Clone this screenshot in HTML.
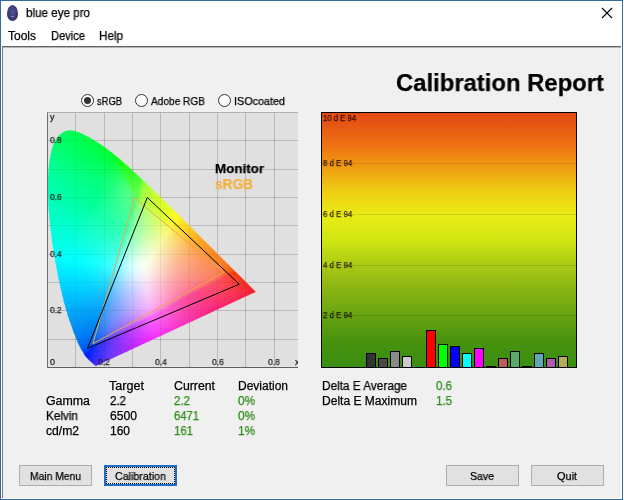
<!DOCTYPE html>
<html><head><meta charset="utf-8"><style>
*{margin:0;padding:0;box-sizing:border-box}
html,body{width:624px;height:500px;overflow:hidden;background:#fff}
body{position:relative;font-family:"Liberation Sans",sans-serif;color:#000}
.abs{position:absolute}
.t{position:absolute;white-space:nowrap;font-weight:normal;will-change:transform;-webkit-text-stroke:0.25px currentColor}
i{position:absolute;height:1px;display:block}
.gv{position:absolute;top:113px;height:254px;width:1px;background:rgba(0,0,0,.13)}
.gh{position:absolute;left:48px;width:250px;height:1px;background:rgba(0,0,0,.13)}
.bar{position:absolute;width:10px;border:1px solid #000}
.dl{position:absolute;left:322px;width:254px;height:1px;background:rgba(0,0,0,.12)}
.btn{position:absolute;top:465px;width:73px;height:21px;background:#e1e1e1;border:1px solid #adadad}
.radio{position:absolute;top:94px;width:13px;height:13px;border-radius:50%;border:1.3px solid #333;background:#fff}
</style></head><body>
<div class="abs" style="left:0;top:0;width:623px;height:500px;border:1px solid #336b9c"></div>
<div class="abs" style="left:7px;top:5px;width:11px;height:16px;border-radius:50% 50% 50% 50%/56% 56% 44% 44%;background:radial-gradient(ellipse at 50% 40%,#50508a 0,#3a3a74 55%,#23234e 100%)"></div><div class="abs" style="left:11px;top:16px;width:3px;height:1px;background:#8a8ab0"></div>
<b class="t" style="left:26.00px;top:6.84px;font-size:12px;line-height:12px;color:#000;transform:scaleX(0.9690);transform-origin:0 0;">blue eye pro</b>
<svg class="abs" style="left:600px;top:6px" width="14" height="14"><path d="M2 2L12 12M12 2L2 12" stroke="#000" stroke-width="1.1"/></svg>
<b class="t" style="left:8.00px;top:29.84px;font-size:12px;line-height:12px;color:#000;">Tools</b>
<b class="t" style="left:51.00px;top:29.84px;font-size:12px;line-height:12px;color:#000;transform:scaleX(0.9264);transform-origin:0 0;">Device</b>
<b class="t" style="left:99.00px;top:29.84px;font-size:12px;line-height:12px;color:#000;transform:scaleX(0.9722);transform-origin:0 0;">Help</b>
<div class="abs" style="left:2px;top:46px;width:619px;height:452px;background:#f0f0f0;border-top:1px solid #646464;border-left:1px solid #7a7a7a;box-shadow:inset 0 1px 0 #b4b4b4"></div>
<b class="t" style="left:396.00px;top:70.68px;font-size:24px;line-height:24px;color:#000;font-weight:bold;transform:scaleX(0.9936);transform-origin:0 0;">Calibration Report</b>
<div class="radio" style="left:81px"><div class="abs" style="left:1.7px;top:1.7px;width:7px;height:7px;border-radius:50%;background:#333"></div></div>
<div class="radio" style="left:135px"></div>
<div class="radio" style="left:218px"></div>
<b class="t" style="left:97.00px;top:95.69px;font-size:11px;line-height:11px;color:#000;transform:scaleX(0.8518);transform-origin:0 0;">sRGB</b>
<b class="t" style="left:151.00px;top:95.69px;font-size:11px;line-height:11px;color:#000;transform:scaleX(0.9199);transform-origin:0 0;">Adobe RGB</b>
<b class="t" style="left:234.00px;top:95.69px;font-size:11px;line-height:11px;color:#000;transform:scaleX(0.9808);transform-origin:0 0;">ISOcoated</b>
<div class="abs" style="left:47px;top:112px;width:251px;height:256px;background:#e0e0e0;border-top:1px solid #b0b0b0;border-left:1px solid #707070;border-bottom:1px solid #606060"></div>
<div class="gv" style="left:75px"></div><div class="gv" style="left:104px"></div><div class="gv" style="left:132px"></div><div class="gv" style="left:160px"></div><div class="gv" style="left:189px"></div><div class="gv" style="left:217px"></div><div class="gv" style="left:245px"></div><div class="gv" style="left:274px"></div><div class="gh" style="top:339px"></div><div class="gh" style="top:310px"></div><div class="gh" style="top:282px"></div><div class="gh" style="top:254px"></div><div class="gh" style="top:225px"></div><div class="gh" style="top:197px"></div><div class="gh" style="top:169px"></div><div class="gh" style="top:140px"></div>
<i style="top:130px;left:66px;width:9px;background:linear-gradient(90deg,#c4e4cf 0px,#8cecae 1.5px,#70ef9c 2.5px,#46f582 3.5px,#38f779 4.5px,#70ef9a 5.5px,#70ef9a 6.5px,#a8e8bd 7.5px,#d2e2d7 9px)"></i>
<i style="top:131px;left:64px;width:14px;background:linear-gradient(90deg,#7eeea7 0px,#1cfb6d 1.5px,#00ff5b 2.5px,#00ff52 10.5px,#2af96c 11.5px,#8cecaa 12.5px,#d2e2d7 14px)"></i>
<i style="top:132px;left:62px;width:18px;background:linear-gradient(90deg,#9aeab8 0px,#1cfb70 1.5px,#00ff5e 2.5px,#00ff4f 15.5px,#46f57c 16.5px,#9aeab2 18px)"></i>
<i style="top:133px;left:60px;width:22px;background:linear-gradient(90deg,#d2e2d8 0px,#62f19a 1.5px,#00ff61 2.5px,#00ff4e 19.5px,#1cfb5f 20.5px,#70ef96 22px)"></i>
<i style="top:134px;left:59px;width:26px;background:linear-gradient(90deg,#d2e2d8 0px,#38f783 1.5px,#00ff63 2.5px,#00ff4c 22.5px,#0efd54 23.5px,#70ef95 24.5px,#c4e4cd 26px)"></i>
<i style="top:135px;left:58px;width:29px;background:linear-gradient(90deg,#d2e2d8 0px,#1cfb76 1.5px,#00ff65 2.5px,#00ff4b 25.5px,#0efd53 26.5px,#70ef94 27.5px,#c4e4cd 29px)"></i>
<i style="top:136px;left:58px;width:31px;background:linear-gradient(90deg,#2af97f 0px,#00ff67 1.5px,#00ff49 27.5px,#0efd51 28.5px,#d2e2d6 31px)"></i>
<i style="top:137px;left:57px;width:33px;background:linear-gradient(90deg,#46f58f 0px,#00ff69 1.5px,#00ff47 30.5px,#1cfb59 31.5px,#8ceca6 33px)"></i>
<i style="top:138px;left:56px;width:36px;background:linear-gradient(90deg,#7eeeae 0px,#00ff6b 1.5px,#00ff46 33.5px,#38f76b 34.5px,#a8e8b9 36px)"></i>
<i style="top:139px;left:55px;width:39px;background:linear-gradient(90deg,#c4e4d2 0px,#0efd75 1.5px,#00ff6c 2.5px,#00ff44 36.5px,#54f37d 37.5px,#d2e2d6 39px)"></i>
<i style="top:140px;left:55px;width:40px;background:linear-gradient(90deg,#54f39a 0px,#00ff6e 1.5px,#00ff43 37.5px,#0efd4b 38.5px,#70ef90 40px)"></i>
<i style="top:141px;left:54px;width:43px;background:linear-gradient(90deg,#a8e8c4 0px,#00ff70 1.5px,#00ff41 40.5px,#38f767 41.5px,#b6e6c1 43px)"></i>
<i style="top:142px;left:54px;width:44px;background:linear-gradient(90deg,#46f595 0px,#00ff71 1.5px,#00ff42 40.5px,#00ff3e 42.5px,#62f184 44px)"></i>
<i style="top:143px;left:53px;width:47px;background:linear-gradient(90deg,#c4e4d3 0px,#00ff73 1.5px,#00ff42 42.5px,#00ff3d 44.5px,#1cfb50 45.5px,#a8e8b6 47px)"></i>
<i style="top:144px;left:53px;width:49px;background:linear-gradient(90deg,#62f1a4 0px,#00ff74 1.5px,#00ff43 42.5px,#00ff3a 46.5px,#70ef8c 47.5px,#d2e2d5 49px)"></i>
<i style="top:145px;left:53px;width:50px;background:linear-gradient(90deg,#0efd7d 0px,#00ff75 1.5px,#00ff44 42.5px,#00ff3a 47.5px,#2af957 48.5px,#a8e8b5 50px)"></i>
<i style="top:146px;left:52px;width:52px;background:linear-gradient(90deg,#a8e8c6 0px,#00ff78 1.5px,#00ff44 44.5px,#00ff39 49.5px,#0efd41 50.5px,#7eee94 52px)"></i>
<i style="top:147px;left:52px;width:54px;background:linear-gradient(90deg,#62f1a7 0px,#00ff79 1.5px,#00ff46 44.5px,#00ff35 51.5px,#38f75e 52.5px,#d2e2d5 54px)"></i>
<i style="top:148px;left:52px;width:55px;background:linear-gradient(90deg,#2af98e 0px,#00ff7a 1.5px,#00ff47 44.5px,#00ff34 52.5px,#0efd3c 53.5px,#a8e8b3 55px)"></i>
<i style="top:149px;left:51px;width:57px;background:linear-gradient(90deg,#c4e4d4 0px,#00ff7c 1.5px,#00ff47 46.5px,#00ff30 55.5px,#70f086 57px)"></i>
<i style="top:150px;left:51px;width:59px;background:linear-gradient(90deg,#8cecbc 0px,#00ff7d 1.5px,#00ff48 46.5px,#00ff2f 56.5px,#38f758 57.5px,#d2e2d4 59px)"></i>
<i style="top:151px;left:51px;width:60px;background:linear-gradient(90deg,#62f1aa 0px,#00ff7e 1.5px,#00ff4a 46.5px,#00ff2e 57.5px,#0efd35 58.5px,#a8e8b1 60px)"></i>
<i style="top:152px;left:51px;width:61px;background:linear-gradient(90deg,#2af993 0px,#00ff80 1.5px,#00ff4a 47.5px,#00ff2d 58.5px,#00ff29 59.5px,#70f082 61px)"></i>
<i style="top:153px;left:51px;width:63px;background:linear-gradient(90deg,#00ff82 0px,#00ff4c 47.5px,#00ff30 58.5px,#00ff27 60.5px,#46f55d 61.5px,#d2e2d4 63px)"></i>
<i style="top:154px;left:50px;width:65px;background:linear-gradient(90deg,#a8e8c9 0px,#00ff83 1.5px,#00ff4c 49.5px,#00ff30 60.5px,#00ff26 62.5px,#2af943 63.5px,#c4e4c6 65px)"></i>
<i style="top:155px;left:50px;width:66px;background:linear-gradient(90deg,#8cecbe 0px,#00ff85 1.5px,#00ff4e 49.5px,#00ff33 60.5px,#00ff24 63.5px,#0efd28 64.5px,#a8e8aa 66px)"></i>
<i style="top:156px;left:50px;width:67px;background:linear-gradient(90deg,#62f1ae 0px,#00ff86 1.5px,#00ff4e 50.5px,#00ff33 61.5px,#00ff22 64.5px,#01ff18 65.5px,#8dec8e 67px)"></i>
<i style="top:157px;left:50px;width:69px;background:linear-gradient(90deg,#38f79e 0px,#00ff87 1.5px,#00ff50 50.5px,#00ff36 61.5px,#02ff20 65.5px,#03ff0f 66.5px,#56f358 67.5px,#d2e2d2 69px)"></i>
<i style="top:158px;left:50px;width:70px;background:linear-gradient(90deg,#0efd8f 0px,#00ff88 1.5px,#00ff50 51.5px,#00ff36 62.5px,#03ff26 65.5px,#04ff1c 66.5px,#05ff08 67.5px,#3df73e 68.5px,#d2e2d3 70px)"></i>
<i style="top:159px;left:49px;width:72px;background:linear-gradient(90deg,#d2e2db 0px,#00ff8b 1.5px,#00ff50 53.5px,#01ff39 63.5px,#05ff24 67.5px,#08ff0a 69.5px,#31f933 70.5px,#c5e4c6 72px)"></i>
<i style="top:160px;left:49px;width:73px;background:linear-gradient(90deg,#a8e8cb 0px,#00ff8c 1.5px,#00ff51 54.5px,#03ff39 64.5px,#07ff2a 67.5px,#08ff20 68.5px,#09ff0b 69.5px,#0aff0c 70.5px,#19fd1b 71.5px,#abe8ac 73px)"></i>
<i style="top:161px;left:49px;width:74px;background:linear-gradient(90deg,#8cecc1 0px,#00ff8d 1.5px,#00ff51 55.5px,#06ff39 65.5px,#09ff28 68.5px,#0cff0d 70.5px,#0eff10 72.5px,#92ec92 74px)"></i>
<i style="top:162px;left:49px;width:75px;background:linear-gradient(90deg,#70efb8 0px,#00ff8f 1.5px,#00ff52 56.5px,#07ff3d 65.5px,#0bff2f 68.5px,#0cff25 69.5px,#0dff0f 70.5px,#12ff13 73.5px,#86ee87 75px)"></i>
<i style="top:163px;left:49px;width:76px;background:linear-gradient(90deg,#46f5aa 0px,#00ff90 1.5px,#00ff53 57.5px,#09ff3e 66.5px,#0eff2d 69.5px,#11ff11 71.5px,#15ff15 74.5px,#62f362 76px)"></i>
<i style="top:164px;left:49px;width:78px;background:linear-gradient(90deg,#38f7a6 0px,#00ff91 1.5px,#02ff52 59.5px,#0cff3e 67.5px,#11ff2a 70.5px,#12ff13 71.5px,#18ff18 75.5px,#4bf74b 76.5px,#d4e2d4 78px)"></i>
<i style="top:165px;left:49px;width:79px;background:linear-gradient(90deg,#0efd98 0px,#00ff92 1.5px,#03ff55 59.5px,#0eff42 67.5px,#13ff32 70.5px,#16ff16 72.5px,#1cff1b 76.5px,#42f941 77.5px,#d4e2d4 79px)"></i>
<i style="top:166px;left:49px;width:80px;background:linear-gradient(90deg,#00ff95 0px,#03ff58 58.5px,#10ff46 67.5px,#15ff38 70.5px,#16ff30 71.5px,#18ff17 72.5px,#20ff1e 77.5px,#39fb37 78.5px,#bce6bc 80px)"></i>
<i style="top:167px;left:48px;width:82px;background:linear-gradient(90deg,#c4e4d7 0px,#00ff96 1.5px,#03ff5c 58.5px,#11ff4a 68.5px,#18ff37 72.5px,#1aff2c 73.5px,#1cff1a 74.5px,#23ff20 79.5px,#30fd2d 80.5px,#bde6bc 82px)"></i>
<i style="top:168px;left:48px;width:83px;background:linear-gradient(90deg,#a8e8ce 0px,#00ff97 1.5px,#03ff5f 57.5px,#15ff4b 69.5px,#1aff3e 72.5px,#1cff35 73.5px,#1eff1f 74.5px,#28ff24 81.5px,#b2e8b1 83px)"></i>
<i style="top:169px;left:48px;width:84px;background:linear-gradient(90deg,#a8e8ce 0px,#00ff99 1.5px,#02ff63 56.5px,#16ff4f 69.5px,#1eff3c 73.5px,#20ff32 74.5px,#22ff1e 75.5px,#2cff27 82.5px,#9dec9b 84px)"></i>
<i style="top:170px;left:48px;width:85px;background:linear-gradient(90deg,#70f0bd 0px,#00ff9a 1.5px,#03ff65 56.5px,#18ff53 69.5px,#20ff43 73.5px,#22ff3b 74.5px,#24ff29 75.5px,#25ff21 76.5px,#2fff29 83.5px,#9eec9c 85px)"></i>
<i style="top:171px;left:48px;width:86px;background:linear-gradient(90deg,#70f0be 0px,#00ff9b 1.5px,#03ff67 55.5px,#1aff57 69.5px,#22ff48 73.5px,#26ff37 75.5px,#28ff23 76.5px,#33ff2b 84.5px,#8aef86 86px)"></i>
<i style="top:172px;left:48px;width:87px;background:linear-gradient(90deg,#70f0bf 0px,#00ff9c 1.5px,#02ff6a 54.5px,#1bff5a 69.5px,#26ff48 74.5px,#28ff40 75.5px,#2cff26 77.5px,#36ff2d 85.5px,#76f371 87px)"></i>
<i style="top:173px;left:48px;width:88px;background:linear-gradient(90deg,#46f5b3 0px,#00ff9e 1.5px,#03ff6c 54.5px,#1fff5c 70.5px,#28ff4d 74.5px,#2cff3d 76.5px,#2eff27 77.5px,#39ff2f 86.5px,#78f372 88px)"></i>
<i style="top:174px;left:48px;width:89px;background:linear-gradient(90deg,#38f7b0 0px,#00ff9f 1.5px,#02ff6e 53.5px,#21ff5f 70.5px,#2cff4d 75.5px,#2eff45 76.5px,#32ff2a 78.5px,#3cff31 87.5px,#6ff567 89px)"></i>
<i style="top:175px;left:48px;width:91px;background:linear-gradient(90deg,#38f7b1 0px,#00ffa0 1.5px,#03ff70 53.5px,#23ff62 70.5px,#2eff52 75.5px,#32ff42 77.5px,#34ff2b 78.5px,#3eff32 88.5px,#5cf953 89.5px,#d6e2d5 91px)"></i>
<i style="top:176px;left:48px;width:92px;background:linear-gradient(90deg,#38f7b2 0px,#00ffa1 1.5px,#02ff72 52.5px,#1fff68 68.5px,#30ff57 75.5px,#34ff4a 77.5px,#37ff2d 79.5px,#40ff33 89.5px,#5ef953 90.5px,#d6e2d5 92px)"></i>
<i style="top:177px;left:48px;width:93px;background:linear-gradient(90deg,#1cfbab 0px,#00ffa3 1.5px,#03ff74 52.5px,#21ff6b 68.5px,#31ff5c 75.5px,#37ff47 78.5px,#39ff2e 79.5px,#42ff34 90.5px,#5ff954 91.5px,#cce4ca 93px)"></i>
<i style="top:178px;left:48px;width:94px;background:linear-gradient(90deg,#00ffa5 0px,#03ff76 52.5px,#1fff6f 67.5px,#33ff60 75.5px,#39ff4e 78.5px,#3dff30 80.5px,#43ff34 91.5px,#57fb49 92.5px,#d0e4ca 94px)"></i>
<i style="top:179px;left:48px;width:95px;background:linear-gradient(90deg,#00ffa6 0px,#03ff78 51.5px,#1eff72 66.5px,#34ff63 75.5px,#3bff54 78.5px,#3dff4b 79.5px,#3eff31 80.5px,#45ff35 91.5px,#45ff34 92.5px,#71fb49 93.5px,#cbe6c0 95px)"></i>
<i style="top:180px;left:48px;width:96px;background:linear-gradient(90deg,#00ffa7 0px,#03ff79 51.5px,#1fff74 66.5px,#36ff67 75.5px,#3eff52 79.5px,#41ff33 81.5px,#46ff35 92.5px,#67ff34 93.5px,#7cfd3e 94.5px,#cee6c0 96px)"></i>
<i style="top:181px;left:48px;width:97px;background:linear-gradient(90deg,#00ffa8 0px,#03ff7a 51.5px,#20ff76 66.5px,#37ff6a 75.5px,#3fff58 79.5px,#41ff4f 80.5px,#43ff33 81.5px,#49ff38 91.5px,#49ff37 92.5px,#6cff36 93.5px,#7aff36 94.5px,#89fd3f 95.5px,#d0e6c0 97px)"></i>
<i style="top:182px;left:48px;width:98px;background:linear-gradient(90deg,#00ffa9 0px,#03ff7c 51.5px,#21ff78 66.5px,#38ff6d 75.5px,#41ff5d 79.5px,#45ff4a 81.5px,#47ff36 82.5px,#4cff39 91.5px,#58ff39 92.5px,#71ff38 93.5px,#87ff36 95.5px,#93fd40 96.5px,#cde8b5 98px)"></i>
<i style="top:183px;left:48px;width:99px;background:linear-gradient(90deg,#00ffaa 0px,#02ff7d 50.5px,#1cff7a 64.5px,#39ff70 75.5px,#46ff5d 80.5px,#48ff54 81.5px,#49ff3f 82.5px,#4bff39 83.5px,#4fff3b 91.5px,#76ff3a 93.5px,#92ff37 96.5px,#9cfd40 97.5px,#cbeaaa 99px)"></i>
<i style="top:184px;left:48px;width:100px;background:linear-gradient(90deg,#00ffac 0px,#02ff7f 50.5px,#1cff7c 64.5px,#3eff72 76.5px,#48ff62 80.5px,#4cff50 82.5px,#4dff3a 83.5px,#51ff3d 91.5px,#7bff3c 93.5px,#95ff39 96.5px,#9fff36 98.5px,#cdeaaa 100px)"></i>
<i style="top:185px;left:48px;width:101px;background:linear-gradient(90deg,#00ffad 0px,#02ff80 50.5px,#1dff7d 64.5px,#3eff77 75.5px,#4aff68 80.5px,#4eff59 82.5px,#4fff46 83.5px,#50ff3d 84.5px,#53ff3e 91.5px,#6fff3e 92.5px,#8aff3c 94.5px,#a2ff37 98.5px,#a6ff36 99.5px,#cceca0 101px)"></i>
<i style="top:186px;left:48px;width:102px;background:linear-gradient(90deg,#00ffae 0px,#02ff81 50.5px,#1dff7f 64.5px,#3fff7b 75.5px,#4cff6c 80.5px,#50ff60 82.5px,#51ff55 83.5px,#52ff3e 84.5px,#55ff3f 91.5px,#74ff3f 92.5px,#8dff3d 94.5px,#a9ff37 99.5px,#acff36 100.5px,#ceec9f 102px)"></i>
<i style="top:187px;left:48px;width:103px;background:linear-gradient(90deg,#00ffaf 0px,#02ff82 50.5px,#1bff80 63.5px,#41ff7e 75.5px,#50ff6c 81.5px,#53ff5d 83.5px,#55ff40 85.5px,#57ff40 91.5px,#79ff40 92.5px,#90ff3f 94.5px,#abff38 99.5px,#b2ff35 101.5px,#d0ec9f 103px)"></i>
<i style="top:188px;left:48px;width:104px;background:linear-gradient(90deg,#00ffb0 0px,#02ff83 50.5px,#19ff82 62.5px,#43ff80 75.5px,#51ff70 81.5px,#54ff63 83.5px,#56ff59 84.5px,#57ff41 85.5px,#59ff42 90.5px,#60ff41 91.5px,#7dff41 92.5px,#9aff3f 95.5px,#b4ff36 101.5px,#b6ff34 102.5px,#cfee94 104px)"></i>
<i style="top:189px;left:48px;width:105px;background:linear-gradient(90deg,#00ffb1 0px,#02ff84 50.5px,#17ff83 61.5px,#44ff83 75.5px,#52ff74 81.5px,#57ff60 84.5px,#59ff42 86.5px,#5aff43 90.5px,#81ff42 92.5px,#9dff3f 95.5px,#b6ff37 101.5px,#baff34 103.5px,#d0ee94 105px)"></i>
<i style="top:190px;left:48px;width:106px;background:linear-gradient(90deg,#00ffb2 0px,#03ff85 51.5px,#15ff85 60.5px,#45ff85 75.5px,#54ff78 81.5px,#58ff66 84.5px,#59ff5c 85.5px,#5aff43 86.5px,#5bff43 90.5px,#84ff43 92.5px,#9fff40 95.5px,#b7ff38 101.5px,#beff33 104.5px,#d2ee93 106px)"></i>
<i style="top:191px;left:48px;width:107px;background:linear-gradient(90deg,#00ffb3 0px,#03ff86 51.5px,#19ff87 61.5px,#46ff87 75.5px,#56ff77 82.5px,#5aff63 85.5px,#5cff44 87.5px,#5cff44 90.5px,#77ff44 91.5px,#92ff42 93.5px,#abff3f 97.5px,#c1ff32 105.5px,#d0f17d 107px)"></i>
<i style="top:192px;left:48px;width:108px;background:linear-gradient(90deg,#00ffb4 0px,#03ff87 51.5px,#24ff8a 64.5px,#4aff88 76.5px,#57ff7a 82.5px,#5bff69 85.5px,#5cff5e 86.5px,#5cff44 87.5px,#5dff44 90.5px,#7bff44 91.5px,#94ff43 93.5px,#b1ff3e 98.5px,#c4ff31 106.5px,#d1f17c 108px)"></i>
<i style="top:193px;left:48px;width:109px;background:linear-gradient(90deg,#00ffb5 0px,#02ff88 51.5px,#2eff8c 67.5px,#4fff87 78.5px,#5aff74 84.5px,#5cff65 86.5px,#5dff45 88.5px,#5eff45 90.5px,#7eff44 91.5px,#96ff43 93.5px,#b2ff3e 98.5px,#c7ff2f 107.5px,#d1f370 109px)"></i>
<i style="top:194px;left:48px;width:110px;background:linear-gradient(90deg,#00ffb6 0px,#01ff8a 50.5px,#2cff8e 66.5px,#50ff89 78.5px,#5bff77 84.5px,#5dff60 87.5px,#5eff45 88.5px,#5eff45 90.5px,#82ff44 91.5px,#98ff43 93.5px,#b4ff3f 98.5px,#c9ff2e 108.5px,#d3f370 110px)"></i>
<i style="top:195px;left:48px;width:111px;background:linear-gradient(90deg,#00ffb7 0px,#02ff8b 50.5px,#2cff8f 66.5px,#50ff8b 78.5px,#5bff7a 84.5px,#5eff66 87.5px,#5eff59 88.5px,#5eff45 89.5px,#6dff45 90.5px,#84ff44 91.5px,#a1ff43 94.5px,#bbff3c 100.5px,#ccff2d 109.5px,#d4f36f 111px)"></i>
<i style="top:196px;left:48px;width:112px;background:linear-gradient(90deg,#00ffb8 0px,#00ff93 41.5px,#03ff8d 50.5px,#2dff90 66.5px,#50ff8d 78.5px,#5bff7d 84.5px,#5eff6b 87.5px,#5eff61 88.5px,#5eff48 89.5px,#87ff44 91.5px,#a2ff43 94.5px,#bcff3c 100.5px,#ceff2c 110.5px,#d5f36e 112px)"></i>
<i style="top:197px;left:48px;width:113px;background:linear-gradient(90deg,#0efdbb 0px,#00ffb8 1.5px,#00ff93 42.5px,#04ff8e 50.5px,#2dff91 66.5px,#50ff8e 78.5px,#5cff7b 85.5px,#5eff67 88.5px,#5eff5a 89.5px,#77ff45 90.5px,#89ff44 91.5px,#a3ff43 94.5px,#bdff3c 100.5px,#d0ff2b 111.5px,#d7f36e 113px)"></i>
<i style="top:198px;left:48px;width:114px;background:linear-gradient(90deg,#38f7c3 0px,#00ffb9 1.5px,#00ff96 40.5px,#03ff90 49.5px,#2aff92 65.5px,#50ff90 78.5px,#5cff7d 85.5px,#5eff6c 88.5px,#5eff62 89.5px,#7cff57 90.5px,#8aff44 91.5px,#a4ff43 94.5px,#bdff3c 100.5px,#d2fe29 112.5px,#d8f36d 114px)"></i>
<i style="top:199px;left:48px;width:116px;background:linear-gradient(90deg,#38f7c4 0px,#00ffba 1.5px,#00ff98 39.5px,#04ff91 49.5px,#2aff93 65.5px,#4fff91 78.5px,#5bff80 85.5px,#5dff6f 88.5px,#68ff67 89.5px,#81ff61 90.5px,#8dff59 91.5px,#96ff44 92.5px,#b4ff40 97.5px,#cbff34 106.5px,#d4fe28 113.5px,#d9f36c 114.5px,#dfe2d4 116px)"></i>
<i style="top:200px;left:48px;width:116px;background:linear-gradient(90deg,#38f7c5 0px,#00ffbb 1.5px,#00ff99 39.5px,#03ff93 48.5px,#27ff94 64.5px,#4fff92 78.5px,#5bff82 85.5px,#5dff73 88.5px,#84ff68 90.5px,#98ff5b 92.5px,#a5ff42 94.5px,#c1ff3b 101.5px,#d6fe27 114.5px,#daf36c 116px)"></i>
<i style="top:201px;left:48px;width:117px;background:linear-gradient(90deg,#38f7c6 0px,#00ffbc 1.5px,#00ff9c 38.5px,#04ff95 48.5px,#28ff95 64.5px,#4eff93 78.5px,#5bff80 86.5px,#5cff76 88.5px,#79ff71 89.5px,#91ff69 91.5px,#a0ff5c 93.5px,#abff41 95.5px,#c6ff38 103.5px,#d8fe26 115.5px,#dbf754 117px)"></i>
<i style="top:202px;left:48px;width:119px;background:linear-gradient(90deg,#38f7c6 0px,#00ffbd 1.5px,#00ff9d 38.5px,#05ff96 48.5px,#28ff96 64.5px,#4eff94 78.5px,#5aff81 86.5px,#5fff78 88.5px,#7dff75 89.5px,#9bff69 92.5px,#acff53 95.5px,#b0ff40 96.5px,#caff36 105.5px,#dafe26 116.5px,#ddf55f 117.5px,#e0e2d4 119px)"></i>
<i style="top:203px;left:48px;width:119px;background:linear-gradient(90deg,#70efcf 0px,#00ffbe 1.5px,#02ff99 46.5px,#22ff97 62.5px,#4dff95 78.5px,#59ff83 86.5px,#5aff7f 87.5px,#81ff78 89.5px,#9cff6e 92.5px,#b1ff54 96.5px,#b4ff3f 97.5px,#cefe33 107.5px,#dcfe25 117.5px,#def45e 119px)"></i>
<i style="top:204px;left:48px;width:121px;background:linear-gradient(90deg,#70efd0 0px,#00ffbf 1.5px,#02ff9b 45.5px,#20ff98 61.5px,#4cff96 78.5px,#59ff85 86.5px,#59ff81 87.5px,#75ff7e 88.5px,#8eff78 90.5px,#adff64 95.5px,#b5ff55 97.5px,#b8ff46 98.5px,#bcff3d 99.5px,#d6fe2c 112.5px,#defe24 118.5px,#e0f652 119.5px,#e0e2d4 121px)"></i>
<i style="top:205px;left:48px;width:122px;background:linear-gradient(90deg,#70efd0 0px,#00ffc0 1.5px,#03ff9c 45.5px,#22ff99 62.5px,#4bff97 78.5px,#58ff86 86.5px,#58ff82 87.5px,#79ff80 88.5px,#97ff78 91.5px,#b5ff5d 97.5px,#bcff4a 99.5px,#bfff3b 100.5px,#dcfe27 116.5px,#e1fe24 119.5px,#e2f45e 120.5px,#e0e2d4 122px)"></i>
<i style="top:206px;left:48px;width:122px;background:linear-gradient(90deg,#70efd1 0px,#00ffc1 1.5px,#02ff9e 44.5px,#20ff9a 61.5px,#4bff97 78.5px,#57ff87 86.5px,#7cff82 88.5px,#98ff7b 91.5px,#b6ff64 97.5px,#bfff4c 100.5px,#c1ff3a 101.5px,#e3fd23 120.5px,#e4f652 122px)"></i>
<i style="top:207px;left:48px;width:124px;background:linear-gradient(90deg,#a8e8d9 0px,#00ffc2 1.5px,#03ffa0 44.5px,#20ff9c 61.5px,#4cff97 79.5px,#56ff89 86.5px,#70ff86 87.5px,#8aff82 89.5px,#aaff74 94.5px,#bfff57 100.5px,#c2ff4d 101.5px,#c4ff39 102.5px,#e6fd23 121.5px,#e6f845 122.5px,#e1e2d4 124px)"></i>
<i style="top:208px;left:48px;width:125px;background:linear-gradient(90deg,#a8e8d9 0px,#00ffc3 1.5px,#03ffa2 43.5px,#20ff9d 61.5px,#4bff98 79.5px,#55ff8a 86.5px,#74ff88 87.5px,#93ff82 90.5px,#b3ff70 96.5px,#c2ff57 101.5px,#c4ff4e 102.5px,#c7ff3b 103.5px,#cffe33 107.5px,#e9fd22 122.5px,#e8f651 123.5px,#e1e2d4 125px)"></i>
<i style="top:209px;left:48px;width:126px;background:linear-gradient(90deg,#a8e8d9 0px,#00ffc4 1.5px,#03ffa5 42.5px,#1eff9e 60.5px,#4aff98 79.5px,#53ff8e 85.5px,#77ff8a 87.5px,#94ff84 90.5px,#b3ff74 96.5px,#c5ff57 102.5px,#c9fe42 104.5px,#cbfe35 105.5px,#ecfd22 123.5px,#eaf651 124.5px,#e1e2d4 126px)"></i>
<i style="top:210px;left:48px;width:127px;background:linear-gradient(90deg,#d2e2de 0px,#00ffc5 1.5px,#02ffa7 41.5px,#1eff9f 60.5px,#49ff99 79.5px,#51ff8f 85.5px,#6aff8d 86.5px,#85ff8a 88.5px,#a6ff7f 93.5px,#c2ff63 101.5px,#c9fe50 104.5px,#cdfe34 106.5px,#effd22 124.5px,#eef745 125.5px,#e1e2d4 127px)"></i>
<i style="top:211px;left:49px;width:127px;background:linear-gradient(90deg,#00ffc6 0px,#03ffa9 40.5px,#1effa1 59.5px,#48ff9a 78.5px,#50ff90 84.5px,#6fff8e 85.5px,#86ff8b 87.5px,#a6ff81 92.5px,#c5fe63 101.5px,#cefe46 105.5px,#d0fe33 106.5px,#f2fd22 124.5px,#f0f745 125.5px,#e1e2d4 127px)"></i>
<i style="top:212px;left:49px;width:128px;background:linear-gradient(90deg,#00ffc7 0px,#03ffab 39.5px,#1effa2 59.5px,#48ff99 79.5px,#4eff93 83.5px,#5bff91 84.5px,#72ff90 85.5px,#90ff8b 88.5px,#b3ff7c 95.5px,#cafe5e 103.5px,#d0fe48 106.5px,#d2fe33 107.5px,#f5fc22 125.5px,#f3f745 126.5px,#e2e2d4 128px)"></i>
<i style="top:213px;left:49px;width:129px;background:linear-gradient(90deg,#1cfbcb 0px,#00ffc7 1.5px,#03ffad 38.5px,#1effa3 59.5px,#48ff9a 79.5px,#4dff94 83.5px,#75ff91 85.5px,#97ff8b 89.5px,#baff78 97.5px,#cefe58 105.5px,#d2fe49 107.5px,#d6fd31 109.5px,#f9fc22 126.5px,#f6f745 127.5px,#e2e2d4 129px)"></i>
<i style="top:214px;left:49px;width:130px;background:linear-gradient(90deg,#38f7ce 0px,#00ffc8 1.5px,#03ffb0 37.5px,#1effa5 59.5px,#47ff9b 79.5px,#4cff95 83.5px,#69ff93 84.5px,#82ff91 86.5px,#a3ff89 91.5px,#c3fe72 100.5px,#d3fd52 107.5px,#d7fd3f 109.5px,#d9fd30 110.5px,#fcfc21 127.5px,#f9f745 128.5px,#e2e2d4 130px)"></i>
<i style="top:215px;left:49px;width:131px;background:linear-gradient(90deg,#38f7cf 0px,#00ffc9 1.5px,#03ffb2 36.5px,#1cffa6 58.5px,#46ff9c 79.5px,#4aff97 82.5px,#54ff96 83.5px,#6dff95 84.5px,#8bff91 87.5px,#b0ff85 94.5px,#cffe63 105.5px,#d7fd4c 109.5px,#d9fd41 110.5px,#dbfd30 111.5px,#fffb21 128.5px,#f9f445 129.5px,#e2e1d4 131px)"></i>
<i style="top:216px;left:49px;width:132px;background:linear-gradient(90deg,#62f1d4 0px,#00ffca 1.5px,#03ffb4 35.5px,#1dffa8 58.5px,#45ff9d 79.5px,#4aff98 82.5px,#70ff96 84.5px,#93ff91 88.5px,#b8ff82 96.5px,#d4fd5e 107.5px,#dcfd44 111.5px,#defd2f 112.5px,#fffa22 128.5px,#fff721 129.5px,#f9f145 130.5px,#e2e1d4 132px)"></i>
<i style="top:217px;left:49px;width:133px;background:linear-gradient(90deg,#70efd6 0px,#00ffcb 1.5px,#03ffb7 34.5px,#1effa9 59.5px,#46ff9c 80.5px,#49ff99 82.5px,#64ff98 83.5px,#7dff96 85.5px,#9fff90 90.5px,#c4fe7a 100.5px,#d9fd5a 109.5px,#dffc46 112.5px,#e1fc35 113.5px,#e5fc2d 115.5px,#fffa24 127.5px,#fef322 130.5px,#f9ed45 131.5px,#e2e1d4 133px)"></i>
<i style="top:218px;left:49px;width:134px;background:linear-gradient(90deg,#70efd6 0px,#00ffcc 1.5px,#03ffb9 33.5px,#1effaa 59.5px,#45ff9d 80.5px,#48ff9a 82.5px,#68ff9a 83.5px,#87ff97 86.5px,#adff8c 93.5px,#d1fd6e 105.5px,#e0fc4f 112.5px,#e4fc3b 114.5px,#e6fc2e 115.5px,#fef825 127.5px,#feef22 131.5px,#f8ea45 132.5px,#e2e1d4 134px)"></i>
<i style="top:219px;left:49px;width:135px;background:linear-gradient(90deg,#a8e8db 0px,#00ffcd 1.5px,#03ffbb 32.5px,#1fffac 59.5px,#45ff9f 80.5px,#46ff9d 81.5px,#6cff9b 83.5px,#8fff97 87.5px,#b5ff8a 95.5px,#d8fd68 108.5px,#e5fc49 114.5px,#e9fc2d 116.5px,#fef926 126.5px,#feeb22 132.5px,#f8e745 133.5px,#e2e0d4 135px)"></i>
<i style="top:220px;left:49px;width:136px;background:linear-gradient(90deg,#a8e8dc 0px,#00ffce 1.5px,#03ffbd 31.5px,#1fffad 59.5px,#46ff9e 81.5px,#60ff9d 82.5px,#79ff9c 84.5px,#9bff96 89.5px,#c2fe84 99.5px,#dffc60 111.5px,#e8fb4b 115.5px,#eafb41 116.5px,#ecfb2d 117.5px,#fef727 126.5px,#fde722 133.5px,#f8e445 134.5px,#e2e0d4 136px)"></i>
<i style="top:221px;left:49px;width:137px;background:linear-gradient(90deg,#c4e4de 0px,#00ffcf 1.5px,#03ffbf 31.5px,#1fffaf 59.5px,#46ff9f 81.5px,#64ff9f 82.5px,#83ff9c 85.5px,#aaff93 92.5px,#d0fd7b 104.5px,#e6fb58 114.5px,#edfb43 117.5px,#effb2d 118.5px,#fef828 125.5px,#fde322 134.5px,#f8e045 135.5px,#e2e0d4 137px)"></i>
<i style="top:222px;left:50px;width:137px;background:linear-gradient(90deg,#00ffd0 0px,#03ffc1 29.5px,#21ffb0 59.5px,#44ffa2 79.5px,#68ffa0 81.5px,#85ff9e 84.5px,#abff95 91.5px,#d3fd7b 104.5px,#eafb59 114.5px,#f1fb46 117.5px,#f5fb2d 119.5px,#fdf629 124.5px,#fddf22 134.5px,#f8dd45 135.5px,#e2e0d4 137px)"></i>
<i style="top:223px;left:50px;width:138px;background:linear-gradient(90deg,#00ffd1 0px,#03ffc3 28.5px,#21ffb1 59.5px,#44ffa3 79.5px,#5cffa2 80.5px,#76ffa1 82.5px,#99ff9c 87.5px,#c1fe8d 97.5px,#e6fb67 112.5px,#f2fb4f 117.5px,#f7fa3c 119.5px,#f9fa2d 120.5px,#fdef28 126.5px,#fddb21 135.5px,#f8da45 136.5px,#e2dfd4 138px)"></i>
<i style="top:224px;left:50px;width:139px;background:linear-gradient(90deg,#38f7d6 0px,#00ffd2 1.5px,#03ffc5 27.5px,#21ffb3 59.5px,#44ffa5 79.5px,#61ffa4 80.5px,#80ffa2 83.5px,#a8ff9a 90.5px,#d0fd85 102.5px,#eefb60 115.5px,#f8fa4a 119.5px,#fafa3f 120.5px,#fdfa2d 121.5px,#fdd821 136.5px,#f8d845 137.5px,#e2dfd4 139px)"></i>
<i style="top:225px;left:50px;width:140px;background:linear-gradient(90deg,#38f7d7 0px,#00ffd3 1.5px,#03ffc7 27.5px,#21ffb5 59.5px,#42ffa7 78.5px,#50ffa6 79.5px,#65ffa6 80.5px,#82ffa3 83.5px,#a9ff9c 90.5px,#d3fd85 103.5px,#f2fa61 116.5px,#fcfa4b 120.5px,#fcf842 121.5px,#fcf62d 122.5px,#fdd421 137.5px,#f8d544 138.5px,#e2dfd4 140px)"></i>
<i style="top:226px;left:50px;width:141px;background:linear-gradient(90deg,#62f1da 0px,#00ffd4 1.5px,#03ffc9 26.5px,#21ffb6 59.5px,#42ffa9 78.5px,#59ffa8 79.5px,#73ffa7 81.5px,#97ffa2 86.5px,#c0fe95 96.5px,#ecfb70 113.5px,#fcf953 120.5px,#fcf444 122.5px,#fcf134 123.5px,#fcef2c 124.5px,#fdd121 138.5px,#f8d244 139.5px,#e2dfd4 141px)"></i>
<i style="top:227px;left:50px;width:142px;background:linear-gradient(90deg,#70efdb 0px,#00ffd5 1.5px,#04ffca 26.5px,#22ffb8 59.5px,#43ffaa 78.5px,#5effaa 79.5px,#7effa8 82.5px,#a7ffa1 89.5px,#d2fd8c 102.5px,#f7fa67 117.5px,#fcf554 121.5px,#fcef46 123.5px,#fceb2c 125.5px,#fdcd21 139.5px,#f8cf44 140.5px,#e2dfd4 142px)"></i>
<i style="top:228px;left:50px;width:143px;background:linear-gradient(90deg,#8cecdd 0px,#00ffd6 1.5px,#03ffcc 25.5px,#22ffba 59.5px,#41ffad 77.5px,#4dffac 78.5px,#63ffab 79.5px,#80ffa9 82.5px,#a8ffa3 89.5px,#d3fd8f 102.5px,#f8fa6b 117.5px,#fbee4e 123.5px,#fbe93c 125.5px,#fce62c 126.5px,#fdca21 140.5px,#f8cc44 141.5px,#e2ded4 143px)"></i>
<i style="top:229px;left:50px;width:144px;background:linear-gradient(90deg,#a8e8de 0px,#00ffd8 1.5px,#04ffce 25.5px,#22ffbb 59.5px,#42ffaf 77.5px,#67ffad 79.5px,#89ffaa 83.5px,#b5ffa1 92.5px,#e5fb84 109.5px,#fbf668 119.5px,#fbe748 125.5px,#fbe53f 126.5px,#fbe32c 127.5px,#fdc621 141.5px,#f8ca44 142.5px,#e2ded4 144px)"></i>
<i style="top:230px;left:50px;width:145px;background:linear-gradient(90deg,#b6e6df 0px,#00ffd9 1.5px,#03ffd0 24.5px,#23ffbd 59.5px,#42ffb0 77.5px,#5dffb0 78.5px,#7dffae 81.5px,#a6ffa8 88.5px,#d3fd95 101.5px,#fbf770 118.5px,#fbe349 126.5px,#fbe141 127.5px,#fbdf2c 128.5px,#fdc321 142.5px,#f8c744 143.5px,#e2ded4 145px)"></i>
<i style="top:231px;left:51px;width:145px;background:linear-gradient(90deg,#00ffda 0px,#04ffd1 23.5px,#23ffbf 58.5px,#41ffb3 75.5px,#48ffb2 76.5px,#62ffb2 77.5px,#80ffb0 80.5px,#a7ffaa 87.5px,#d4fd98 100.5px,#faf877 116.5px,#fbe250 125.5px,#fbdd42 127.5px,#fcd92b 129.5px,#fdc020 142.5px,#f8c444 143.5px,#e2ded4 145px)"></i>
<i style="top:232px;left:51px;width:146px;background:linear-gradient(90deg,#0efddc 0px,#00ffdb 1.5px,#03ffd3 22.5px,#24ffc0 58.5px,#42ffb5 75.5px,#66ffb4 77.5px,#89ffb1 81.5px,#b5ffa8 90.5px,#e7fb8e 107.5px,#faf67a 116.5px,#fbde51 126.5px,#fbd739 129.5px,#fcd52a 130.5px,#fdbc20 143.5px,#f8c243 144.5px,#e2ded4 146px)"></i>
<i style="top:233px;left:51px;width:147px;background:linear-gradient(90deg,#38f7dd 0px,#00ffdc 1.5px,#03ffd5 22.5px,#24ffc2 58.5px,#43ffb7 75.5px,#5cffb6 76.5px,#74ffb5 78.5px,#9cffb1 84.5px,#c8fea4 95.5px,#faf780 115.5px,#fbda51 127.5px,#fcd43b 130.5px,#fcd22a 131.5px,#fdb920 144.5px,#f7bf43 145.5px,#e2ddd4 147px)"></i>
<i style="top:234px;left:51px;width:148px;background:linear-gradient(90deg,#46f5de 0px,#00ffdd 1.5px,#04ffd6 22.5px,#23ffc5 57.5px,#44ffb9 75.5px,#61ffb8 76.5px,#80ffb7 79.5px,#a8ffb1 86.5px,#d5fda1 99.5px,#f9f885 114.5px,#fbd752 128.5px,#fcd03d 131.5px,#fcce2a 132.5px,#fdb620 145.5px,#f7bc43 146.5px,#e2ddd4 148px)"></i>
<i style="top:235px;left:51px;width:149px;background:linear-gradient(90deg,#70efe0 0px,#00ffdf 1.5px,#04ffd8 22.5px,#24ffc6 57.5px,#43ffbc 74.5px,#66ffba 76.5px,#89ffb8 80.5px,#b6ffb0 89.5px,#e5fb99 105.5px,#f9f688 114.5px,#fbd352 129.5px,#fccd3f 132.5px,#fcc929 134.5px,#fdb320 146.5px,#f7ba43 147.5px,#e2ddd4 149px)"></i>
<i style="top:236px;left:51px;width:150px;background:linear-gradient(90deg,#7eeee0 0px,#00ffe0 1.5px,#04ffda 22.5px,#23ffc9 56.5px,#44ffbe 74.5px,#5cffbd 75.5px,#75ffbc 77.5px,#9dffb8 83.5px,#c9feac 94.5px,#f9f78d 113.5px,#fbd257 129.5px,#fcc940 133.5px,#fcc528 135.5px,#fdaf1f 147.5px,#f7b743 148.5px,#e4dac8 150px)"></i>
<i style="top:237px;left:51px;width:151px;background:linear-gradient(90deg,#a8e8e0 0px,#00ffe1 1.5px,#03ffdb 21.5px,#23ffcb 56.5px,#46ffc0 74.5px,#62ffbf 75.5px,#80ffbe 78.5px,#a9ffb9 85.5px,#d4fdab 97.5px,#f9f892 112.5px,#fbce57 130.5px,#fcc641 134.5px,#fcc438 135.5px,#fcc228 136.5px,#fcac1f 148.5px,#f7b543 149.5px,#e2ddd4 151px)"></i>
<i style="top:238px;left:51px;width:152px;background:linear-gradient(90deg,#c4e4e0 0px,#00ffe3 1.5px,#03ffdd 21.5px,#23ffcd 55.5px,#45ffc2 73.5px,#67ffc1 75.5px,#8affbf 79.5px,#b8ffb8 88.5px,#e7fba3 104.5px,#f9f694 112.5px,#fccb57 131.5px,#fcc242 135.5px,#fcc039 136.5px,#fdbe27 137.5px,#fca91f 149.5px,#f9af37 150.5px,#e2dcd4 152px)"></i>
<i style="top:239px;left:52px;width:152px;background:linear-gradient(90deg,#00ffe4 0px,#03ffdf 20.5px,#22ffd0 53.5px,#46ffc5 72.5px,#5dffc4 73.5px,#76ffc3 75.5px,#9fffc0 81.5px,#cbffb5 92.5px,#f8f799 110.5px,#fcc757 131.5px,#fdbd3b 136.5px,#fdbb2a 137.5px,#fcaa20 147.5px,#fca61f 149.5px,#f8ac37 150.5px,#e2dcd4 152px)"></i>
<i style="top:240px;left:52px;width:153px;background:linear-gradient(90deg,#1cfbe5 0px,#00ffe5 1.5px,#04ffe0 21.5px,#22ffd1 53.5px,#48ffc7 72.5px,#63ffc6 73.5px,#82ffc5 76.5px,#abffc1 83.5px,#d6feb4 95.5px,#f8f69b 110.5px,#fcc457 132.5px,#fdba3c 137.5px,#fdb626 139.5px,#fca41f 150.5px,#f6ae43 151.5px,#e3d8c8 153px)"></i>
<i style="top:241px;left:52px;width:154px;background:linear-gradient(90deg,#38f7e5 0px,#00ffe6 1.5px,#04ffe1 21.5px,#21ffd4 52.5px,#47ffca 71.5px,#54ffc9 72.5px,#68ffc9 73.5px,#8cffc7 77.5px,#b6ffc1 85.5px,#e2fdb1 99.5px,#f8f79f 109.5px,#fcc156 133.5px,#fdb73d 138.5px,#fdb325 140.5px,#fba120 151.5px,#f8a737 152.5px,#e3d8c8 154px)"></i>
<i style="top:242px;left:52px;width:155px;background:linear-gradient(90deg,#62f1e5 0px,#00ffe8 1.5px,#04ffe3 21.5px,#20ffd6 51.5px,#49ffcc 71.5px,#6dffcb 73.5px,#8fffc9 77.5px,#bcffc3 86.5px,#ebfcaf 102.5px,#f8f5a1 109.5px,#fdbb52 135.5px,#fdb43e 139.5px,#fdb236 140.5px,#fdb025 141.5px,#fb9e20 152.5px,#f7a537 153.5px,#e2dcd4 155px)"></i>
<i style="top:243px;left:52px;width:156px;background:linear-gradient(90deg,#70f0e5 0px,#00ffe9 1.5px,#04ffe5 21.5px,#1fffd9 50.5px,#4affce 71.5px,#64ffce 72.5px,#84ffcd 75.5px,#adffc9 82.5px,#d8ffbd 94.5px,#f8f6a6 108.5px,#fdb852 136.5px,#fdaf37 141.5px,#fdad25 142.5px,#fb9c20 153.5px,#f7a338 154.5px,#e3d7c8 156px)"></i>
<i style="top:244px;left:52px;width:157px;background:linear-gradient(90deg,#a8e8e3 0px,#00ffeb 1.5px,#04ffe6 21.5px,#1effdb 49.5px,#47ffd1 69.5px,#49ffd1 70.5px,#54ffd0 71.5px,#6affd0 72.5px,#8effce 76.5px,#b9ffca 84.5px,#e2febb 97.5px,#f8f8aa 107.5px,#fdb552 137.5px,#fdac39 142.5px,#fda824 144.5px,#fa9920 154.5px,#f7a138 155.5px,#e3d7c8 157px)"></i>
<i style="top:245px;left:52px;width:158px;background:linear-gradient(90deg,#b6e6e2 0px,#00ffec 1.5px,#04ffe8 21.5px,#1dffdd 48.5px,#46ffd4 68.5px,#4bffd3 70.5px,#6fffd2 72.5px,#92ffd1 76.5px,#bfffcb 85.5px,#ebfdb9 100.5px,#f8f6ac 107.5px,#fdb04e 139.5px,#fda93a 143.5px,#fca524 145.5px,#fa9721 155.5px,#f69f38 156.5px,#e3d7c8 158px)"></i>
<i style="top:246px;left:53px;width:158px;background:linear-gradient(90deg,#00ffee 0px,#04ffe9 21.5px,#1dffdf 47.5px,#45ffd7 66.5px,#4dffd5 69.5px,#66ffd5 70.5px,#86ffd4 73.5px,#b0ffd1 80.5px,#d8ffc7 91.5px,#f8f7b1 105.5px,#fdaf52 138.5px,#fda63b 143.5px,#fca433 144.5px,#fca323 145.5px,#fa9521 155.5px,#f69d39 156.5px,#e3d6c8 158px)"></i>
<i style="top:247px;left:53px;width:159px;background:linear-gradient(90deg,#2af9ec 0px,#00ffef 1.5px,#04ffeb 21.5px,#1cffe2 46.5px,#44ffd9 65.5px,#4fffd8 69.5px,#6cffd7 70.5px,#8affd7 73.5px,#b3ffd3 80.5px,#dbffca 91.5px,#f8f9b5 104.5px,#fdb059 137.5px,#fca33c 144.5px,#fca235 145.5px,#fca023 146.5px,#f99321 156.5px,#f69b39 157.5px,#e3d6c8 159px)"></i>
<i style="top:248px;left:53px;width:160px;background:linear-gradient(90deg,#38f7ec 0px,#00fff0 1.5px,#05ffec 22.5px,#1cffe4 46.5px,#45ffdc 65.5px,#4effda 68.5px,#71ffda 70.5px,#94ffd9 74.5px,#bfffd5 82.5px,#e4ffc9 94.5px,#f8f7b7 104.5px,#fdaf5c 137.5px,#fca13d 145.5px,#fc9f36 146.5px,#fc9e28 147.5px,#fb9b23 149.5px,#f99122 157.5px,#f49f45 158.5px,#e3d6c8 160px)"></i>
<i style="top:249px;left:53px;width:161px;background:linear-gradient(90deg,#70f0e9 0px,#00fff2 1.5px,#04ffee 22.5px,#1bffe6 45.5px,#44ffde 64.5px,#4fffdd 68.5px,#67ffdc 69.5px,#80ffdc 71.5px,#a9ffda 77.5px,#d3ffd3 87.5px,#f8f8bc 103.5px,#fdb061 136.5px,#fc9e3e 146.5px,#fb9a23 149.5px,#f88f22 158.5px,#f59839 159.5px,#e3d6c8 161px)"></i>
<i style="top:250px;left:53px;width:162px;background:linear-gradient(90deg,#8cece7 0px,#00fff3 1.5px,#05ffef 23.5px,#1bffe8 45.5px,#45ffe1 64.5px,#51ffdf 68.5px,#6dffdf 69.5px,#8cffde 72.5px,#b6ffdb 79.5px,#deffd3 90.5px,#f8fac0 102.5px,#fdb066 135.5px,#fc9e44 146.5px,#fb9931 149.5px,#fb9823 150.5px,#f88d22 159.5px,#f5973a 160.5px,#e1dbd4 162px)"></i>
<i style="top:251px;left:53px;width:163px;background:linear-gradient(90deg,#a8e8e5 0px,#00fff5 1.5px,#04fff1 23.5px,#19ffea 44.5px,#41ffe3 62.5px,#50ffe2 67.5px,#72ffe1 69.5px,#97ffe0 73.5px,#c2ffdd 81.5px,#e5ffd3 92.5px,#f8f8c2 102.5px,#fdb36d 133.5px,#fc9b45 147.5px,#fb9734 150.5px,#fb9624 151.5px,#f88c23 160.5px,#f4953a 161.5px,#e3d5c8 163px)"></i>
<i style="top:252px;left:53px;width:164px;background:linear-gradient(90deg,#d2e2e1 0px,#00fff6 1.5px,#05fff2 24.5px,#19ffec 44.5px,#42ffe6 62.5px,#51ffe4 67.5px,#68ffe4 68.5px,#82ffe3 70.5px,#acffe2 76.5px,#d7ffdc 86.5px,#f8fcca 100.5px,#fcb979 129.5px,#fc9946 148.5px,#fb9536 151.5px,#fa9424 152.5px,#f78a23 161.5px,#f58f2e 162.5px,#e3d5c8 164px)"></i>
<i style="top:253px;left:54px;width:164px;background:linear-gradient(90deg,#0efdf6 0px,#00fff8 1.5px,#05fff4 24.5px,#19ffee 43.5px,#43ffe8 61.5px,#53ffe6 66.5px,#6effe6 67.5px,#8effe6 70.5px,#baffe3 77.5px,#dfffdd 87.5px,#f8fbcb 99.5px,#fcba7c 127.5px,#fb9847 148.5px,#fa9438 151.5px,#fa9124 153.5px,#f78923 161.5px,#f4933a 162.5px,#e1dad4 164px)"></i>
<i style="top:254px;left:54px;width:165px;background:linear-gradient(90deg,#38f7f3 0px,#00fff9 1.5px,#05fff5 25.5px,#1bffef 44.5px,#47ffea 62.5px,#51ffe9 65.5px,#74ffe9 67.5px,#99ffe8 71.5px,#c5ffe5 79.5px,#e9ffdc 90.5px,#f9facd 99.5px,#fcbb80 126.5px,#fb9648 149.5px,#fa923a 152.5px,#f99024 154.5px,#f78823 162.5px,#f4923a 163.5px,#e3d5c8 165px)"></i>
<i style="top:255px;left:54px;width:166px;background:linear-gradient(90deg,#62f1ef 0px,#00fffb 1.5px,#05fff7 25.5px,#19fff2 43.5px,#45ffec 61.5px,#52ffeb 65.5px,#68ffeb 66.5px,#83ffeb 68.5px,#afffe9 74.5px,#d8ffe5 83.5px,#f9fdd4 97.5px,#fcbc84 125.5px,#fb9449 150.5px,#f99033 154.5px,#f98e24 155.5px,#f68623 163.5px,#f3913a 164.5px,#e3d5c8 166px)"></i>
<i style="top:256px;left:54px;width:167px;background:linear-gradient(90deg,#7eeeed 0px,#00fffc 1.5px,#05fff9 26.5px,#1bfff3 44.5px,#4affee 62.5px,#53ffee 65.5px,#6fffed 66.5px,#90ffed 69.5px,#bcffeb 76.5px,#e3ffe5 86.5px,#f9fcd6 97.5px,#fcbd88 124.5px,#fb9550 149.5px,#f98f3d 154.5px,#f98e36 155.5px,#f98d25 156.5px,#f68523 164.5px,#f29546 165.5px,#e3d4c8 167px)"></i>
<i style="top:257px;left:54px;width:168px;background:linear-gradient(90deg,#a8e8e7 0px,#00fffe 1.5px,#05fffa 26.5px,#19fff6 43.5px,#47fff1 61.5px,#51fff0 64.5px,#5efff0 65.5px,#74fff0 66.5px,#9bffef 70.5px,#c8ffec 78.5px,#eaffe6 88.5px,#f9fbd7 97.5px,#fcbc89 124.5px,#fb9655 148.5px,#f98e3e 155.5px,#f98d38 156.5px,#f88c2b 157.5px,#f88a25 159.5px,#f68422 165.5px,#f38e39 166.5px,#e4cebc 168px)"></i>
<i style="top:258px;left:54px;width:169px;background:linear-gradient(90deg,#d2e2e2 0px,#00fdfe 1.5px,#05fffc 27.5px,#1bfff7 44.5px,#4bfff3 62.5px,#52fff2 64.5px,#78fff2 66.5px,#9dfff1 70.5px,#cbffef 78.5px,#ecffe8 88.5px,#f9fddc 96.5px,#fcba8a 124.5px,#fb9658 148.5px,#f98d40 156.5px,#f88a25 159.5px,#f68322 166.5px,#f38d39 167.5px,#e3d4c8 169px)"></i>
<i style="top:259px;left:55px;width:169px;background:linear-gradient(90deg,#0efafc 0px,#00fcfe 1.5px,#04fffe 26.5px,#19fffa 42.5px,#46fff6 59.5px,#53fff5 63.5px,#6efff5 64.5px,#90fff4 67.5px,#befff2 74.5px,#e7ffed 84.5px,#fafcdd 95.5px,#fcbb8e 122.5px,#fc985f 145.5px,#f98d45 155.5px,#f88a32 158.5px,#f88924 159.5px,#f68121 166.5px,#f38c38 167.5px,#e3d4c8 169px)"></i>
<i style="top:260px;left:55px;width:170px;background:linear-gradient(90deg,#38f4f6 0px,#00fafe 1.5px,#05fffe 27.5px,#1bfffb 43.5px,#4dfff7 61.5px,#5afff7 63.5px,#73fff7 64.5px,#93fff6 67.5px,#c0fff4 74.5px,#e8ffef 84.5px,#fafde2 94.5px,#fcba8f 122.5px,#fc9863 144.5px,#f98c46 156.5px,#f88935 159.5px,#f88824 160.5px,#f68020 167.5px,#f4842b 168.5px,#e3d4c8 170px)"></i>
<i style="top:261px;left:55px;width:171px;background:linear-gradient(90deg,#62eef1 0px,#00f9fe 1.5px,#04fffe 27.5px,#1bfffd 43.5px,#4efffa 61.5px,#51fffa 62.5px,#77fff9 64.5px,#9efff8 68.5px,#ccfff6 76.5px,#efffef 86.5px,#fafce3 94.5px,#fcb990 122.5px,#fc9864 144.5px,#f98d4b 156.5px,#f88836 160.5px,#f88724 161.5px,#f67e1f 168.5px,#f38936 169.5px,#e3d3c8 171px)"></i>
<i style="top:262px;left:55px;width:172px;background:linear-gradient(90deg,#9ae7e9 0px,#00f7fe 1.5px,#04fffe 27.5px,#18fffd 42.5px,#47fffc 59.5px,#52fffc 62.5px,#6cfffc 63.5px,#87fffb 65.5px,#b4fffa 71.5px,#dffff5 80.5px,#f7ffee 89.5px,#fbf9e1 95.5px,#fcb993 121.5px,#fc9969 142.5px,#f98d4e 156.5px,#f88738 161.5px,#f78423 163.5px,#f67c1d 169.5px,#f38734 170.5px,#e4cdbb 172px)"></i>
<i style="top:263px;left:55px;width:173px;background:linear-gradient(90deg,#b6e4e6 0px,#00f6fe 1.5px,#04fdfe 28.5px,#1afffd 43.5px,#4ffffd 61.5px,#52fffd 62.5px,#71fffd 63.5px,#93fffd 66.5px,#c1fffb 73.5px,#ebfff5 83.5px,#faffed 91.5px,#fcdfc2 105.5px,#fcae88 126.5px,#fb9362 148.5px,#f98a48 159.5px,#f88639 162.5px,#f78322 164.5px,#f6791b 170.5px,#f57e26 171.5px,#e3d3c7 173px)"></i>
<i style="top:264px;left:56px;width:173px;background:linear-gradient(90deg,#00f4fe 0px,#04fcff 27.5px,#1afdfe 42.5px,#4ffffd 60.5px,#75fffe 62.5px,#9cfffd 66.5px,#cdfffc 74.5px,#f1fff5 84.5px,#fbfce9 92.5px,#fcb795 120.5px,#fc996e 140.5px,#f98c52 156.5px,#f88439 162.5px,#f88331 163.5px,#f78121 164.5px,#f6771a 170.5px,#f57b25 171.5px,#e3d2c7 173px)"></i>
<i style="top:265px;left:56px;width:174px;background:linear-gradient(90deg,#38eef7 0px,#00f3fe 1.5px,#04faff 27.5px,#1afcfe 42.5px,#4ffdfe 60.5px,#69fefe 61.5px,#84fefe 63.5px,#b2fffe 69.5px,#e2fffa 79.5px,#fafff2 88.5px,#fcf5e1 95.5px,#fcb596 120.5px,#fc986f 140.5px,#f98b52 157.5px,#f88239 163.5px,#f88132 164.5px,#f77f1f 165.5px,#f67318 171.5px,#f37f2f 172.5px,#e4cbba 174px)"></i>
<i style="top:266px;left:56px;width:175px;background:linear-gradient(90deg,#54ebf3 0px,#00f1fe 1.5px,#04f9ff 28.5px,#1cfafe 43.5px,#50fbfe 60.5px,#6dfcff 61.5px,#8ffdff 64.5px,#befffe 71.5px,#eafff9 81.5px,#fbfff1 89.5px,#fddec8 103.5px,#fcac8d 124.5px,#fc946a 145.5px,#f9884f 159.5px,#f8803a 164.5px,#f87e32 165.5px,#f77a1d 167.5px,#f67015 172.5px,#f47b2d 173.5px,#e3d1c6 175px)"></i>
<i style="top:267px;left:56px;width:176px;background:linear-gradient(90deg,#7ee7ed 0px,#00f0ff 1.5px,#04f7ff 28.5px,#1cf8fe 43.5px,#4cf9ff 59.5px,#71faff 61.5px,#99fbff 65.5px,#c9fefe 73.5px,#f0fff8 83.5px,#fbfcee 91.5px,#fcb095 121.5px,#fc9671 141.5px,#fa8955 158.5px,#f87e39 165.5px,#f87927 167.5px,#f7771b 168.5px,#f76b13 173.5px,#f5701f 174.5px,#e3d1c6 176px)"></i>
<i style="top:268px;left:56px;width:177px;background:linear-gradient(90deg,#a8e4e8 0px,#00eeff 1.5px,#04f5ff 28.5px,#1cf6ff 43.5px,#4cf7ff 59.5px,#64f7ff 60.5px,#80f8ff 62.5px,#aefaff 68.5px,#dffefd 78.5px,#fafff4 88.5px,#fde4d3 100.5px,#fcad94 122.5px,#fc9570 142.5px,#fa8754 159.5px,#f87b39 166.5px,#f87628 168.5px,#f77319 169.5px,#f76611 174.5px,#f56c1e 175.5px,#e4c8b9 177px)"></i>
<i style="top:269px;left:56px;width:178px;background:linear-gradient(90deg,#d2e1e2 0px,#00edff 1.5px,#03f4ff 28.5px,#19f5ff 42.5px,#4cf5ff 59.5px,#69f6ff 60.5px,#8bf7ff 63.5px,#baf9ff 70.5px,#e6fdfc 80.5px,#fbfdf3 89.5px,#fcac95 122.5px,#fc9573 141.5px,#fa8756 159.5px,#f87a3d 166.5px,#f87129 169.5px,#f86e16 170.5px,#f76110 175.5px,#f46f2a 176.5px,#e4c7b9 178px)"></i>
<i style="top:270px;left:57px;width:178px;background:linear-gradient(90deg,#1ceafb 0px,#00ebff 1.5px,#03f2ff 27.5px,#19f3ff 41.5px,#48f3ff 57.5px,#57f3ff 58.5px,#6cf3ff 59.5px,#8cf5ff 62.5px,#bbf8ff 69.5px,#e6fcfc 79.5px,#fcfaf2 89.5px,#fcac98 120.5px,#fc9475 139.5px,#fa8658 158.5px,#f8763c 166.5px,#f86c28 169.5px,#f86817 170.5px,#f75d0f 174.5px,#f75a0f 175.5px,#f46928 176.5px,#e4c6b9 178px)"></i>
<i style="top:271px;left:57px;width:179px;background:linear-gradient(90deg,#46e7f5 0px,#00eaff 1.5px,#04f0ff 28.5px,#1bf1ff 42.5px,#47f1ff 57.5px,#5ef1ff 58.5px,#7bf2ff 60.5px,#a9f4ff 66.5px,#dbf9ff 76.5px,#f9faf6 87.5px,#feddd2 100.5px,#fcab98 120.5px,#fc9377 139.5px,#fb855a 158.5px,#f9703b 167.5px,#f86528 170.5px,#f75d10 172.5px,#f7500d 176.5px,#f5551a 177.5px,#e4c3b8 179px)"></i>
<i style="top:272px;left:57px;width:180px;background:linear-gradient(90deg,#70e4ef 0px,#00e8ff 1.5px,#04efff 28.5px,#1befff 42.5px,#47efff 57.5px,#63efff 58.5px,#86f0ff 61.5px,#b5f3ff 68.5px,#e2f8fe 78.5px,#fcf6f3 89.5px,#fca999 120.5px,#fc9278 139.5px,#fb8259 159.5px,#f96a3a 168.5px,#f85c27 171.5px,#f7520e 173.5px,#f7480d 175.5px,#f73d0c 176.5px,#f6390c 177.5px,#f54219 178.5px,#e4c0b8 180px)"></i>
<i style="top:273px;left:57px;width:181px;background:linear-gradient(90deg,#a8e2e8 0px,#00e7ff 1.5px,#04edff 28.5px,#1aedff 42.5px,#43edff 56.5px,#4fedff 57.5px,#66edff 58.5px,#87eeff 61.5px,#b5f1ff 68.5px,#e4f6fe 79.5px,#fcf5f3 89.5px,#fca89a 120.5px,#fc9179 139.5px,#fb805b 159.5px,#f9663d 168.5px,#f84d25 172.5px,#f83d1d 173.5px,#f73d0d 174.5px,#f6390a 178.5px,#f54217 179.5px,#e4c0b8 181px)"></i>
<i style="top:274px;left:57px;width:182px;background:linear-gradient(90deg,#d2e0e2 0px,#00e5ff 1.5px,#03ebff 28.5px,#1aebff 42.5px,#42eaff 56.5px,#69ebff 58.5px,#90ecff 62.5px,#c0f0ff 70.5px,#eaf5fd 81.5px,#fcf1f1 90.5px,#fca89d 119.5px,#fc917b 138.5px,#fb805e 158.5px,#fa6a48 166.5px,#f95336 170.5px,#f84131 171.5px,#f73d1c 175.5px,#f73b0a 177.5px,#f63909 179.5px,#f54216 180.5px,#e4c0b7 182px)"></i>
<i style="top:275px;left:58px;width:182px;background:linear-gradient(90deg,#1ce3fb 0px,#00e3ff 1.5px,#03e9ff 27.5px,#1ae9ff 41.5px,#42e8ff 55.5px,#5de8ff 56.5px,#77e9ff 58.5px,#a4ebff 64.5px,#d5f1ff 74.5px,#f8f3f8 86.5px,#fed9d7 98.5px,#fca59b 119.5px,#fc8f7b 138.5px,#fc7e60 157.5px,#fa654a 165.5px,#f95842 167.5px,#f94a3e 168.5px,#f84032 171.5px,#f73c1b 176.5px,#f63a08 178.5px,#f63807 179.5px,#f54214 180.5px,#e4c0b7 182px)"></i>
<i style="top:276px;left:58px;width:183px;background:linear-gradient(90deg,#46e1f5 0px,#00e2ff 1.5px,#03e7ff 27.5px,#1ce7ff 42.5px,#43e6ff 55.5px,#60e6ff 56.5px,#81e7ff 59.5px,#b0eaff 66.5px,#dff0ff 77.5px,#fceff5 88.5px,#fca59e 118.5px,#fc8e7d 137.5px,#fc7d63 156.5px,#fb6852 163.5px,#fa5c4b 165.5px,#fa4844 167.5px,#f73c20 177.5px,#f63806 180.5px,#f44113 181.5px,#e4c0b7 183px)"></i>
<i style="top:277px;left:58px;width:184px;background:linear-gradient(90deg,#70e0ef 0px,#00e0ff 1.5px,#03e5ff 27.5px,#1be5ff 42.5px,#3de4ff 54.5px,#63e4ff 56.5px,#8ae5ff 60.5px,#beeaff 69.5px,#ebeffd 81.5px,#fcebf3 89.5px,#fca39f 118.5px,#fb8c7e 137.5px,#fc7b66 155.5px,#fb6656 162.5px,#fa4b4d 165.5px,#f63a1e 179.5px,#f63710 181.5px,#f44011 182.5px,#e4c0b7 184px)"></i>
<i style="top:278px;left:58px;width:185px;background:linear-gradient(90deg,#a8e0e8 0px,#00dfff 1.5px,#04e4ff 28.5px,#1de3ff 43.5px,#3ce1ff 54.5px,#56e1ff 55.5px,#70e2ff 57.5px,#9ee4ff 63.5px,#d3eaff 74.5px,#fcecf6 88.5px,#fca2a0 118.5px,#fb8b7f 137.5px,#fd7a68 154.5px,#fc685c 160.5px,#fb5a57 162.5px,#fb4e54 163.5px,#f63921 180.5px,#f53617 182.5px,#f43f1c 183.5px,#e4bfb6 185px)"></i>
<i style="top:279px;left:58px;width:186px;background:linear-gradient(90deg,#d2e0e2 0px,#00ddff 1.5px,#04e2ff 28.5px,#1de0ff 43.5px,#3bdfff 54.5px,#5adfff 55.5px,#7be0ff 58.5px,#a9e3ff 65.5px,#ddeaff 77.5px,#fce8f4 89.5px,#fca2a3 117.5px,#fb8a81 136.5px,#fd786b 153.5px,#fc645f 159.5px,#fc4f5b 161.5px,#f63823 181.5px,#f5341a 183.5px,#f43d22 184.5px,#e4bfb9 186px)"></i>
<i style="top:280px;left:59px;width:186px;background:linear-gradient(90deg,#1cdcfb 0px,#00dcff 1.5px,#04e0ff 27.5px,#1cdeff 42.5px,#37ddff 52.5px,#5cddff 54.5px,#83deff 58.5px,#b8e2ff 67.5px,#e9e9fe 80.5px,#fce6f4 88.5px,#fca1a4 116.5px,#fb8780 136.5px,#fd746b 152.5px,#fd6664 156.5px,#fc5f62 157.5px,#fc5060 158.5px,#f53521 182.5px,#f5331d 183.5px,#f33c25 184.5px,#e4bfba 186px)"></i>
<i style="top:281px;left:59px;width:187px;background:linear-gradient(90deg,#54dcf3 0px,#00daff 1.5px,#04deff 27.5px,#1cdcff 42.5px,#36daff 52.5px,#4fdaff 53.5px,#6adbff 55.5px,#97ddff 61.5px,#cde3ff 72.5px,#f9e6f8 86.5px,#febcc4 104.5px,#fb9597 122.5px,#fd736f 150.5px,#fd6067 155.5px,#fd5165 156.5px,#f73d34 177.5px,#f5311f 184.5px,#f33a28 185.5px,#e4bfba 187px)"></i>
<i style="top:282px;left:59px;width:188px;background:linear-gradient(90deg,#7edded 0px,#00d9ff 1.5px,#04dcff 27.5px,#1bdaff 42.5px,#35d8ff 52.5px,#53d8ff 53.5px,#74d9ff 56.5px,#a3dbff 63.5px,#d7e2ff 75.5px,#fce2f5 88.5px,#fc9ea5 116.5px,#fb817f 138.5px,#fd6e70 150.5px,#fd616b 153.5px,#fd5469 154.5px,#f6382f 180.5px,#f42f21 185.5px,#f3392a 186.5px,#e4bebb 188px)"></i>
<i style="top:283px;left:59px;width:189px;background:linear-gradient(90deg,#a8dee8 0px,#00d7ff 1.5px,#04daff 27.5px,#1dd8ff 43.5px,#31d6ff 51.5px,#56d6ff 53.5px,#7dd6ff 57.5px,#b1dbff 66.5px,#e7e2fe 80.5px,#fcdef2 89.5px,#fc9ca6 116.5px,#fb7e80 138.5px,#fd6a72 149.5px,#fd616f 151.5px,#fd516c 153.5px,#fb4952 166.5px,#f42d23 186.5px,#f3372c 187.5px,#e4bebb 189px)"></i>
<i style="top:284px;left:60px;width:189px;background:linear-gradient(90deg,#00d5ff 0px,#04d8ff 26.5px,#1cd5ff 42.5px,#30d3ff 50.5px,#48d3ff 51.5px,#63d3ff 53.5px,#91d5ff 59.5px,#c7dbff 70.5px,#f8e0f9 85.5px,#ffc7d7 97.5px,#fb939e 119.5px,#fd6d76 145.5px,#fd6172 148.5px,#fd506f 150.5px,#fb4a56 164.5px,#f42f29 184.5px,#f42b24 186.5px,#f3352d 187.5px,#e4bdbc 189px)"></i>
<i style="top:285px;left:60px;width:190px;background:linear-gradient(90deg,#38d7f7 0px,#00d4ff 1.5px,#04d6ff 26.5px,#1cd3ff 42.5px,#2fd1ff 50.5px,#4cd1ff 51.5px,#6ed1ff 54.5px,#9cd4ff 61.5px,#d5dcff 74.5px,#fcdcf6 87.5px,#fd9dac 113.5px,#fb7a84 135.5px,#fc6677 145.5px,#fd5a74 147.5px,#fd4f73 148.5px,#fc4a59 163.5px,#f42f2d 184.5px,#f42925 187.5px,#f3332f 188.5px,#e4bdbc 190px)"></i>
<i style="top:286px;left:60px;width:191px;background:linear-gradient(90deg,#62d8f1 0px,#00d2ff 1.5px,#04d4ff 27.5px,#1dd1ff 43.5px,#2bcfff 49.5px,#38ceff 50.5px,#4fcfff 51.5px,#6ecfff 54.5px,#a1d2ff 62.5px,#dbdaff 76.5px,#fcd8f4 88.5px,#fc97a8 115.5px,#fb7281 138.5px,#fc6179 144.5px,#fd4e76 146.5px,#fc4a5d 162.5px,#f42e30 184.5px,#f42727 188.5px,#f33130 189.5px,#e4bdbc 191px)"></i>
<i style="top:287px;left:60px;width:192px;background:linear-gradient(90deg,#8cdaeb 0px,#00d1fe 1.5px,#04d2ff 27.5px,#1fceff 44.5px,#2accff 49.5px,#51ccff 51.5px,#77cdff 55.5px,#aad1ff 64.5px,#e4dafe 79.5px,#fcd7f4 88.5px,#fc98ab 114.5px,#fb6f83 137.5px,#fc607c 142.5px,#fc5a7b 143.5px,#fc4d7a 144.5px,#fc4a60 161.5px,#f52f34 183.5px,#f42528 189.5px,#f32f32 190.5px,#e4bcbd 192px)"></i>
<i style="top:288px;left:60px;width:193px;background:linear-gradient(90deg,#c4dee4 0px,#00cffe 1.5px,#04d0ff 27.5px,#1eccff 44.5px,#29caff 49.5px,#45caff 50.5px,#5ecaff 52.5px,#8acbff 58.5px,#c3d2ff 70.5px,#fbd7f8 87.5px,#fd9db3 111.5px,#fa7389 133.5px,#fb607f 140.5px,#fc5a7e 141.5px,#fc4c7d 142.5px,#fd4a63 160.5px,#f52e37 183.5px,#f42229 190.5px,#f32d33 191.5px,#e4bcbd 193px)"></i>
<i style="top:289px;left:61px;width:193px;background:linear-gradient(90deg,#0ecffc 0px,#00cdfe 1.5px,#04ceff 26.5px,#1dc9ff 43.5px,#26c8ff 47.5px,#2fc8ff 48.5px,#48c8ff 49.5px,#68c8ff 52.5px,#9acaff 60.5px,#d9d4ff 75.5px,#fcd3f5 87.5px,#fd97af 112.5px,#fb6785 135.5px,#fb5a81 138.5px,#fb4d80 139.5px,#fc4762 160.5px,#f42c37 183.5px,#f4202b 190.5px,#f32b34 191.5px,#e4bbbd 193px)"></i>
<i style="top:290px;left:61px;width:194px;background:linear-gradient(90deg,#46d2f5 0px,#00ccfe 1.5px,#04ccff 26.5px,#1ec7ff 44.5px,#24c6ff 47.5px,#4bc5ff 49.5px,#70c6ff 53.5px,#a4c9ff 62.5px,#e2d3fe 78.5px,#fbd2f5 87.5px,#fd98b2 111.5px,#fa6488 134.5px,#fb5a85 136.5px,#fb4a82 138.5px,#fd4866 158.5px,#f52d3b 182.5px,#f41e2c 191.5px,#f32936 192.5px,#e4bbbe 194px)"></i>
<i style="top:291px;left:61px;width:195px;background:linear-gradient(90deg,#70d5ef 0px,#00cafe 1.5px,#05caff 27.5px,#1fc4ff 45.5px,#23c3ff 47.5px,#3fc3ff 48.5px,#58c3ff 50.5px,#84c4ff 56.5px,#c1ccff 69.5px,#fad2f9 86.5px,#fe9eba 108.5px,#fa6a8e 130.5px,#fa5b88 134.5px,#fb4a85 136.5px,#fd4667 158.5px,#f52c3e 182.5px,#f41c2d 192.5px,#f32737 193.5px,#e4bbbe 195px)"></i>
<i style="top:292px;left:61px;width:194px;background:linear-gradient(90deg,#a8dae7 0px,#00c9fe 1.5px,#05c8ff 27.5px,#20c1fe 46.5px,#22c1fe 47.5px,#42c1fe 48.5px,#62c1ff 51.5px,#94c3ff 59.5px,#d7ceff 75.5px,#fbcff6 87.5px,#fd94b3 111.5px,#fa608d 131.5px,#fa4989 134.5px,#fd4468 158.5px,#f5293e 183.5px,#f41d32 191.5px,#f14051 192.5px,#e8969d 194px)"></i>
<i style="top:293px;left:62px;width:191px;background:linear-gradient(90deg,#00c7fd 0px,#05c6ff 26.5px,#1fbffe 45.5px,#45bffe 47.5px,#6bbffe 51.5px,#9dc2ff 60.5px,#e0cdfe 77.5px,#fbcdf7 86.5px,#fd95b7 109.5px,#fa6191 128.5px,#fa558e 130.5px,#fa498c 131.5px,#fd4269 157.5px,#f52840 182.5px,#f41f37 188.5px,#ef4e60 189.5px,#e5afb5 191px)"></i>
<i style="top:294px;left:62px;width:189px;background:linear-gradient(90deg,#38ccf6 0px,#00c5fd 1.5px,#06c4fe 27.5px,#1ebdfe 45.5px,#38bdfe 46.5px,#53bdfe 48.5px,#7ebdfe 54.5px,#bbc4ff 67.5px,#f9cdf9 85.5px,#ffa4c7 103.5px,#fa6295 126.5px,#fa5792 128.5px,#fa4990 129.5px,#fd4069 157.5px,#f52742 182.5px,#f4213c 186.5px,#ed6879 187.5px,#e4bcc1 189px)"></i>
<i style="top:295px;left:62px;width:187px;background:linear-gradient(90deg,#70d2ee 0px,#00c4fd 1.5px,#07c2fe 28.5px,#1dbbfe 45.5px,#3cbbfe 46.5px,#5dbbfe 49.5px,#8ebcfe 57.5px,#d5c8ff 74.5px,#fbcaf8 86.5px,#fe9ac0 106.5px,#fa6499 124.5px,#fa5896 126.5px,#fa4a94 127.5px,#fd3e6a 157.5px,#f52443 183.5px,#f52341 184.5px,#ed697c 185.5px,#e3c8cc 187px)"></i>
<i style="top:296px;left:62px;width:185px;background:linear-gradient(90deg,#a8d9e7 0px,#00c2fd 1.5px,#07c0fe 29.5px,#1bb9fd 44.5px,#40b9fd 46.5px,#65b9fd 50.5px,#9cbcfe 60.5px,#e5c9fd 79.5px,#fbc7f6 87.5px,#fe95be 107.5px,#fa659e 122.5px,#fa5a9a 124.5px,#fa4b98 125.5px,#fd3c6b 157.5px,#f62647 181.5px,#f43050 182.5px,#e1d4d6 185px)"></i>
<i style="top:297px;left:63px;width:182px;background:linear-gradient(90deg,#00c1fc 0px,#07befd 28.5px,#1ab7fd 43.5px,#32b7fd 44.5px,#4eb6fd 46.5px,#79b7fd 52.5px,#b9beff 66.5px,#f8c7fa 84.5px,#ffa7d1 99.5px,#fa68a2 119.5px,#fa5d9e 121.5px,#fa4b9b 123.5px,#fd3a6c 156.5px,#f6274c 178.5px,#f33d5d 179.5px,#e98e9e 180.5px,#e1d4d6 182px)"></i>
<i style="top:298px;left:63px;width:179px;background:linear-gradient(90deg,#38c7f5 0px,#00bffc 1.5px,#08bbfd 29.5px,#19b5fd 43.5px,#37b5fd 44.5px,#58b4fd 47.5px,#89b6fd 55.5px,#d3c2fe 73.5px,#fbc3f7 86.5px,#fe9ac8 103.5px,#fb6aa7 117.5px,#fa56a1 120.5px,#fa4c9f 121.5px,#fd386d 156.5px,#f72850 176.5px,#f43e61 177.5px,#e89aa9 179px)"></i>
<i style="top:299px;left:63px;width:177px;background:linear-gradient(90deg,#70cfee 0px,#00bdfc 1.5px,#08b9fd 30.5px,#16b3fc 42.5px,#25b3fc 43.5px,#3bb3fc 44.5px,#59b2fc 47.5px,#89b4fd 55.5px,#d3c0fe 73.5px,#fbc2f7 86.5px,#ff9bcb 102.5px,#fb68aa 116.5px,#fa4ea4 119.5px,#fc346c 157.5px,#f82855 174.5px,#f25577 175.5px,#e6b1bd 177px)"></i>
<i style="top:300px;left:63px;width:175px;background:linear-gradient(90deg,#9ad5e9 0px,#00bcfb 1.5px,#09b7fc 31.5px,#15b1fc 42.5px,#2db1fc 43.5px,#49b1fc 45.5px,#74b1fc 51.5px,#b4b8fe 65.5px,#f7c2fb 84.5px,#ffa7d9 97.5px,#fc75b4 112.5px,#fb5dab 116.5px,#fb50a9 117.5px,#fc326c 157.5px,#f82859 172.5px,#f16182 173.5px,#e6b2be 175px)"></i>
<i style="top:301px;left:63px;width:173px;background:linear-gradient(90deg,#d2dee2 0px,#00bafb 1.5px,#09b5fc 31.5px,#14affc 42.5px,#32affc 43.5px,#4aaffc 45.5px,#74affc 51.5px,#b8b7fe 66.5px,#f7c0fc 84.5px,#ffa8dd 96.5px,#fc78b9 110.5px,#fb61b0 114.5px,#fb52ae 115.5px,#fc3d82 143.5px,#fb2c64 164.5px,#f9285d 170.5px,#f06d8d 171.5px,#e3c9cf 173px)"></i>
<i style="top:302px;left:64px;width:170px;background:linear-gradient(90deg,#39c2f4 0px,#00b8fb 1.5px,#0ab2fc 32.5px,#12aefc 40.5px,#1eadfb 41.5px,#36adfb 42.5px,#54adfb 45.5px,#84aefc 53.5px,#d2bafe 72.5px,#fbbcf9 85.5px,#fe9ad3 99.5px,#fc72ba 109.5px,#fc64b6 111.5px,#fb55b3 112.5px,#fb3f88 138.5px,#fc2a68 161.5px,#fa2862 166.5px,#f83369 167.5px,#ed83a0 168.5px,#e3c9d0 170px)"></i>
<i style="top:303px;left:64px;width:168px;background:linear-gradient(90deg,#71cced 0px,#01b7fa 1.5px,#0ab0fb 32.5px,#12acfb 40.5px,#39abfb 42.5px,#5dabfb 46.5px,#92adfc 56.5px,#e6bcfe 78.5px,#fbbafa 85.5px,#fe9ad7 98.5px,#fd75c0 107.5px,#fc68bb 109.5px,#fc57b9 110.5px,#fa3f8d 135.5px,#fc2969 161.5px,#fb2766 164.5px,#f9326c 165.5px,#e2d4d8 168px)"></i>
<i style="top:304px;left:64px;width:165px;background:linear-gradient(90deg,#b6d8e5 0px,#01b5fa 1.5px,#08affb 30.5px,#11aafb 40.5px,#2da9fb 41.5px,#46a9fb 43.5px,#70a9fb 49.5px,#b3b0fd 64.5px,#f6b9fd 83.5px,#fdaeed 90.5px,#fe87cd 102.5px,#fd6cc1 107.5px,#fc59bc 109.5px,#fa3f8f 134.5px,#fc276b 160.5px,#fb2669 162.5px,#f83d77 163.5px,#ea9ab3 165px)"></i>
<i style="top:305px;left:65px;width:162px;background:linear-gradient(90deg,#10b6f8 0px,#01b3fa 1.5px,#0aacfb 32.5px,#0fa8fb 38.5px,#15a8fb 39.5px,#31a8fb 40.5px,#50a7fb 43.5px,#7fa8fb 51.5px,#d1b4fe 71.5px,#fbb5fb 84.5px,#fe96db 96.5px,#fd77c9 103.5px,#fc5cc2 106.5px,#fa4093 131.5px,#fc256e 158.5px,#fc256d 159.5px,#f55489 160.5px,#ea9ab4 162px)"></i>
<i style="top:306px;left:65px;width:160px;background:linear-gradient(90deg,#48c0f1 0px,#02b1f9 1.5px,#07abfa 28.5px,#0ea6fa 38.5px,#35a6fa 40.5px,#59a6fa 44.5px,#8da7fb 54.5px,#e5b5fe 77.5px,#fbb1f9 85.5px,#fe92dc 96.5px,#fd74cd 102.5px,#fd5fc8 104.5px,#f94096 129.5px,#fc2470 157.5px,#f5538b 158.5px,#e7b1c3 160px)"></i>
<i style="top:307px;left:65px;width:158px;background:linear-gradient(90deg,#8dcee9 0px,#02b0f9 1.5px,#04abf9 22.5px,#0da4fa 38.5px,#28a4fa 39.5px,#42a4fa 41.5px,#6ba4fa 47.5px,#b2aafc 63.5px,#f2b2fe 81.5px,#fcacf7 86.5px,#fe8ddd 96.5px,#fd78d3 100.5px,#fd61ce 102.5px,#f9419a 127.5px,#fc2373 155.5px,#f26a9b 156.5px,#e4c8d2 158px)"></i>
<i style="top:308px;left:65px;width:156px;background:linear-gradient(90deg,#c4dae3 0px,#03aef8 1.5px,#03aaf9 17.5px,#0ca2fa 38.5px,#2da2fa 39.5px,#4ca2fa 42.5px,#7ba3fa 50.5px,#d0adfe 71.5px,#faacfd 84.5px,#fd90e3 94.5px,#fd7bd9 98.5px,#fd73d6 99.5px,#fd64d4 100.5px,#f9419d 126.5px,#fc2377 152.5px,#fb2d7d 153.5px,#f2699d 154.5px,#e4c8d3 156px)"></i>
<i style="top:309px;left:66px;width:153px;background:linear-gradient(90deg,#1fb3f5 0px,#03acf8 1.5px,#03a8f8 17.5px,#0ba1f9 36.5px,#30a1f9 38.5px,#55a1f9 42.5px,#89a1fa 52.5px,#e1adff 75.5px,#fba7fb 84.5px,#fd8ae4 93.5px,#fd77dc 96.5px,#fd66da 97.5px,#f9419f 124.5px,#fc237b 149.5px,#fb2e80 150.5px,#e2d4d9 153px)"></i>
<i style="top:310px;left:66px;width:151px;background:linear-gradient(90deg,#64c2ed 0px,#04abf8 1.5px,#02a7f8 15.5px,#0a9ff9 36.5px,#249ff9 37.5px,#3e9ff9 39.5px,#679ff9 45.5px,#aea3fc 61.5px,#eea9ff 79.5px,#fba2fc 84.5px,#fd87e7 92.5px,#fd7ae2 94.5px,#fd68e0 95.5px,#f941a2 123.5px,#fc247f 147.5px,#f93a8a 148.5px,#eb98ba 149.5px,#e2d4da 151px)"></i>
<i style="top:311px;left:66px;width:148px;background:linear-gradient(90deg,#a9d2e6 0px,#04a9f7 1.5px,#02a5f7 13.5px,#099df9 36.5px,#299df9 37.5px,#489df9 40.5px,#779df9 48.5px,#cca5fe 69.5px,#f6a2ff 82.5px,#fc8df0 89.5px,#fc7ce8 92.5px,#fd68e3 94.5px,#f940a3 123.5px,#fc2582 145.5px,#f83b8d 146.5px,#eb99bc 148px)"></i>
<i style="top:312px;left:67px;width:145px;background:linear-gradient(90deg,#20aff4 0px,#04a7f7 1.5px,#02a3f7 14.5px,#079cf9 34.5px,#2c9cf9 36.5px,#4a9cf9 39.5px,#7c9cf9 48.5px,#d6a3ff 71.5px,#f99bff 82.5px,#fc84f1 88.5px,#fc69e9 91.5px,#f93fa4 122.5px,#fc2686 142.5px,#f5539b 143.5px,#e7b1c9 145px)"></i>
<i style="top:313px;left:67px;width:143px;background:linear-gradient(90deg,#57bcee 0px,#05a6f6 1.5px,#02a1f7 15.5px,#069bf8 34.5px,#1f9af8 35.5px,#3a9af9 37.5px,#649af9 43.5px,#ae9cfc 60.5px,#e99dff 77.5px,#fa92fe 83.5px,#fb7ff4 87.5px,#fc6aef 89.5px,#f93fa6 121.5px,#fb2789 140.5px,#e7b1ca 143px)"></i>
<i style="top:314px;left:67px;width:141px;background:linear-gradient(90deg,#9ccde7 0px,#05a4f6 1.5px,#019ff6 14.5px,#0599f8 34.5px,#2499f8 35.5px,#3c99f8 37.5px,#6498f9 43.5px,#ae9afc 60.5px,#e699ff 76.5px,#fa8aff 83.5px,#fb77f7 86.5px,#fb69f5 87.5px,#fa56cb 104.5px,#fa3298 130.5px,#fb288d 138.5px,#f16cab 139.5px,#e3c9d5 141px)"></i>
<i style="top:315px;left:67px;width:139px;background:linear-gradient(90deg,#d2dce1 0px,#05a3f6 1.5px,#019df6 15.5px,#0498f8 33.5px,#1197f8 34.5px,#2897f8 35.5px,#4697f8 38.5px,#7896f9 47.5px,#ce98ff 69.5px,#ef8eff 79.5px,#fa7fff 83.5px,#fa77fd 84.5px,#fa68fa 85.5px,#fb5bd6 100.5px,#f9359e 127.5px,#fa2a92 135.5px,#f93495 136.5px,#e2d4db 139px)"></i>
<i style="top:316px;left:68px;width:136px;background:linear-gradient(90deg,#4ab5ef 0px,#05a0f5 1.5px,#019bf6 16.5px,#0396f8 32.5px,#1a95f8 33.5px,#3696f8 35.5px,#6095f8 41.5px,#aa94fb 58.5px,#e28fff 74.5px,#f47eff 80.5px,#f777ff 81.5px,#f966ff 82.5px,#fa5ede 96.5px,#f934a0 125.5px,#fa2b95 132.5px,#f7409e 133.5px,#ed84b9 134.5px,#e2d4db 136px)"></i>
<i style="top:317px;left:68px;width:133px;background:linear-gradient(90deg,#8ec8e8 0px,#069ff5 1.5px,#0099f6 17.5px,#0294f8 32.5px,#2094f8 33.5px,#3894f8 35.5px,#6094f8 41.5px,#aa91fb 58.5px,#df8aff 73.5px,#ee7cff 78.5px,#f176ff 79.5px,#f464ff 80.5px,#fa65f9 85.5px,#fa55d3 101.5px,#f92f9c 128.5px,#fa2c99 130.5px,#f741a1 131.5px,#ea9bc4 133px)"></i>
<i style="top:318px;left:68px;width:131px;background:linear-gradient(90deg,#d2dce1 0px,#069df5 1.5px,#0098f5 17.5px,#0093f7 31.5px,#0a92f7 32.5px,#2392f7 33.5px,#4292f8 36.5px,#7491f9 45.5px,#ca8bff 67.5px,#e57eff 75.5px,#eb74ff 77.5px,#ee67ff 78.5px,#f363ff 80.5px,#f964fc 84.5px,#f957d8 99.5px,#f92e9f 127.5px,#f92d9d 128.5px,#f359ad 129.5px,#e8a7ca 131px)"></i>
<i style="top:319px;left:69px;width:128px;background:linear-gradient(90deg,#4ab1ee 0px,#069bf5 1.5px,#0096f5 17.5px,#0091f7 30.5px,#2791f7 32.5px,#4a91f8 36.5px,#818ef9 47.5px,#d482ff 69.5px,#e472ff 74.5px,#ea5fff 76.5px,#f962ff 82.5px,#f956db 97.5px,#f92ea1 125.5px,#f359b0 126.5px,#e6b3cf 128px)"></i>
<i style="top:320px;left:69px;width:126px;background:linear-gradient(90deg,#8ec6e8 0px,#069af4 1.5px,#0094f5 17.5px,#008ff7 30.5px,#1a8ff7 31.5px,#348ff7 33.5px,#5c8ff8 39.5px,#aa88fc 57.5px,#d47aff 69.5px,#de6fff 72.5px,#e45cff 74.5px,#f860ff 82.5px,#f954dc 97.5px,#f92fa5 123.5px,#f070ba 124.5px,#e3c9d8 126px)"></i>
<i style="top:321px;left:69px;width:124px;background:linear-gradient(90deg,#d2dce1 0px,#0698f4 1.5px,#0092f5 16.5px,#008df7 30.5px,#1f8df7 31.5px,#3d8ef7 34.5px,#6b8cf8 42.5px,#c07efe 63.5px,#d471ff 69.5px,#da64ff 71.5px,#dd58ff 72.5px,#f85eff 82.5px,#f852dd 97.5px,#f831ac 120.5px,#f73aad 121.5px,#ee7cc0 122.5px,#e3cad9 124px)"></i>
<i style="top:322px;left:70px;width:121px;background:linear-gradient(90deg,#58b2ed 0px,#0696f4 1.5px,#0090f5 16.5px,#008cf7 28.5px,#228cf7 30.5px,#3e8cf7 33.5px,#708af8 42.5px,#bf78fe 62.5px,#d069ff 67.5px,#d462ff 68.5px,#d754ff 69.5px,#f85cff 81.5px,#f84fdb 97.5px,#f832b0 117.5px,#f73bb1 118.5px,#e2d5dd 121px)"></i>
<i style="top:323px;left:70px;width:119px;background:linear-gradient(90deg,#9cc9e6 0px,#0695f4 1.5px,#008ff4 15.5px,#008af6 28.5px,#248af7 30.5px,#468af7 34.5px,#8185f9 46.5px,#bf71fe 62.5px,#cd60ff 66.5px,#d050ff 67.5px,#f859ff 81.5px,#f74ddc 97.5px,#f832b5 115.5px,#f547b8 116.5px,#e99ece 117.5px,#e2d5dd 119px)"></i>
<i style="top:324px;left:71px;width:115px;background:linear-gradient(90deg,#1398f3 0px,#0593f4 1.5px,#008df4 16.5px,#0088f6 27.5px,#1988f7 28.5px,#3989f7 31.5px,#6687f8 39.5px,#b173fc 57.5px,#c264fe 62.5px,#c65eff 63.5px,#c94dff 64.5px,#f757ff 80.5px,#f74adc 96.5px,#f833b9 112.5px,#f352bf 113.5px,#e99ed0 115px)"></i>
<i style="top:325px;left:71px;width:113px;background:linear-gradient(90deg,#57afec 0px,#0591f4 1.5px,#008bf4 16.5px,#0087f6 26.5px,#0886f6 27.5px,#1c86f6 28.5px,#3987f7 31.5px,#6b84f8 40.5px,#ad6ffc 56.5px,#bf5cfe 61.5px,#c24ffe 62.5px,#c94bff 64.5px,#f754ff 80.5px,#f746db 97.5px,#f733be 110.5px,#f25ec5 111.5px,#e6b4d7 113px)"></i>
<i style="top:326px;left:71px;width:111px;background:linear-gradient(90deg,#9cc7e6 0px,#0590f4 1.5px,#0089f4 17.5px,#0085f6 26.5px,#1f85f6 28.5px,#4185f7 32.5px,#7d7ef9 44.5px,#ad68fc 56.5px,#b85afd 59.5px,#bf48fe 61.5px,#f752ff 80.5px,#f644db 97.5px,#f734c3 108.5px,#ee74cd 109.5px,#e4bfda 111px)"></i>
<i style="top:327px;left:72px;width:108px;background:linear-gradient(90deg,#2099f1 0px,#048ef3 1.5px,#0083f6 24.5px,#0082f6 25.5px,#2183f6 27.5px,#4183f7 31.5px,#8179f9 44.5px,#a963fc 54.5px,#b450fd 57.5px,#b845fd 58.5px,#f44fff 78.5px,#f64efa 83.5px,#f734c8 105.5px,#ee74d0 106.5px,#e3cadc 108px)"></i>
<i style="top:328px;left:72px;width:106px;background:linear-gradient(90deg,#64b1eb 0px,#038cf4 1.5px,#0080f6 25.5px,#1681f6 26.5px,#3481f7 29.5px,#667df8 38.5px,#9968fb 50.5px,#a958fc 54.5px,#b043fd 56.5px,#ec4cff 75.5px,#f64cff 80.5px,#f639d4 100.5px,#f636cf 102.5px,#f53fce 103.5px,#e1d5df 106px)"></i>
<i style="top:329px;left:72px;width:104px;background:linear-gradient(90deg,#b7d0e4 0px,#038bf4 1.5px,#007ff6 24.5px,#087ef6 25.5px,#247ff6 27.5px,#4d7ef7 33.5px,#896dfa 46.5px,#a158fb 52.5px,#a550fc 53.5px,#a841fc 54.5px,#e649ff 73.5px,#f649ff 80.5px,#f636d4 100.5px,#f34ad4 101.5px,#ea95d9 102.5px,#e1d5df 104px)"></i>
<i style="top:330px;left:73px;width:100px;background:linear-gradient(90deg,#1e94f1 0px,#0289f4 1.5px,#007cf6 23.5px,#257df6 26.5px,#4d7bf7 32.5px,#846af9 44.5px,#9957fb 49.5px,#9d50fb 50.5px,#a13ffb 51.5px,#de46ff 69.5px,#f646ff 79.5px,#f536d9 97.5px,#f34ad8 98.5px,#e89fdc 100px)"></i>
<i style="top:331px;left:73px;width:98px;background:linear-gradient(90deg,#71b4ea 0px,#0187f4 1.5px,#007af6 23.5px,#1c7af6 25.5px,#427af7 30.5px,#776cf9 41.5px,#9057fa 47.5px,#9450fb 48.5px,#993efb 49.5px,#d843ff 67.5px,#f543ff 79.5px,#f536de 95.5px,#f05fdd 96.5px,#e7aade 98px)"></i>
<i style="top:332px;left:73px;width:96px;background:linear-gradient(90deg,#d2dae1 0px,#0186f4 1.5px,#0177f6 23.5px,#1277f6 24.5px,#3578f7 28.5px,#6e6cf9 39.5px,#8857fa 45.5px,#8c51fa 46.5px,#9042fa 47.5px,#9d3efb 50.5px,#da41ff 68.5px,#f540ff 79.5px,#f535e3 93.5px,#ee6ae0 94.5px,#e5b5e0 96px)"></i>
<i style="top:333px;left:74px;width:93px;background:linear-gradient(90deg,#46a1ee 0px,#0084f4 1.5px,#0075f6 21.5px,#0675f6 22.5px,#1f75f6 24.5px,#4773f7 30.5px,#7264f9 39.5px,#8351fa 43.5px,#8c3dfa 45.5px,#ce3fff 63.5px,#f53dff 78.5px,#f534e7 90.5px,#ed74e3 91.5px,#e3cae0 93px)"></i>
<i style="top:334px;left:74px;width:91px;background:linear-gradient(90deg,#8cbde8 0px,#0082f4 1.5px,#0074f6 20.5px,#0072f6 21.5px,#2872f6 25.5px,#5b6af8 34.5px,#7658f9 40.5px,#7f48f9 42.5px,#833cfa 43.5px,#c83cff 61.5px,#f53aff 78.5px,#f534ee 87.5px,#f33eeb 88.5px,#ea89e5 89.5px,#e3cae1 91px)"></i>
<i style="top:335px;left:75px;width:88px;background:linear-gradient(90deg,#1c8cf2 0px,#0080f4 1.5px,#0071f6 19.5px,#0070f6 20.5px,#206ff6 23.5px,#4b6af7 30.5px,#6d58f9 37.5px,#7649f9 39.5px,#7a3cf9 40.5px,#c13bff 58.5px,#f537ff 77.5px,#f533f3 84.5px,#f33def 85.5px,#e1d5e1 88px)"></i>
<i style="top:336px;left:75px;width:85px;background:linear-gradient(90deg,#62a9ec 0px,#007ef4 1.5px,#0070f6 18.5px,#006df6 20.5px,#196cf6 22.5px,#4667f7 29.5px,#6357f8 35.5px,#6c4af9 37.5px,#713bf9 38.5px,#be39fe 57.5px,#f534ff 77.5px,#f531f7 82.5px,#f246f2 83.5px,#e89ee7 85px)"></i>
<i style="top:337px;left:75px;width:83px;background:linear-gradient(90deg,#c4d4e3 0px,#007df5 1.5px,#006ef6 18.5px,#056bf6 20.5px,#2269f6 23.5px,#545af8 32.5px,#634af8 35.5px,#673af9 36.5px,#b738fe 55.5px,#ee33ff 74.5px,#f530fe 79.5px,#f530fc 80.5px,#ef5bf3 81.5px,#e89de9 83px)"></i>
<i style="top:338px;left:76px;width:80px;background:linear-gradient(90deg,#3894f0 0px,#007af5 1.5px,#006df6 16.5px,#0069f6 18.5px,#2366f6 22.5px,#4f55f8 30.5px,#594af8 32.5px,#5d38f8 33.5px,#ac38fd 51.5px,#e431ff 69.5px,#f52eff 77.5px,#ef5af7 78.5px,#e5b3e7 80px)"></i>
<i style="top:339px;left:76px;width:78px;background:linear-gradient(90deg,#9ac0e7 0px,#0078f5 1.5px,#006af6 16.5px,#0066f6 18.5px,#1d63f6 21.5px,#4554f7 28.5px,#4f49f8 30.5px,#533af8 31.5px,#ac37fd 51.5px,#e42fff 69.5px,#f22cff 75.5px,#ed6ff3 76.5px,#e4bee6 78px)"></i>
<i style="top:340px;left:77px;width:75px;background:linear-gradient(90deg,#1c84f3 0px,#0076f5 1.5px,#0068f6 14.5px,#0262f6 17.5px,#1f5ff7 20.5px,#404ff7 26.5px,#4e35f8 29.5px,#9439fb 44.5px,#d12fff 61.5px,#eb2aff 71.5px,#ec35fd 72.5px,#ea6ef3 73.5px,#e2c9e4 75px)"></i>
<i style="top:341px;left:77px;width:73px;background:linear-gradient(90deg,#70aaeb 0px,#0074f6 1.5px,#0065f6 14.5px,#0060f6 16.5px,#105ef6 18.5px,#374ff7 24.5px,#403ff7 26.5px,#4535f8 27.5px,#8f39fb 43.5px,#ce2eff 60.5px,#e629ff 69.5px,#e834fd 70.5px,#e1d4e2 73px)"></i>
<i style="top:342px;left:77px;width:71px;background:linear-gradient(90deg,#d2d9e1 0px,#0e79f5 1.5px,#0071f6 2.5px,#0061f6 14.5px,#005cf6 16.5px,#2752f7 21.5px,#3741f7 24.5px,#3c34f7 25.5px,#8f38fb 43.5px,#cd2bff 60.5px,#e127ff 67.5px,#e33efb 68.5px,#e38fee 69.5px,#e1d4e2 71px)"></i>
<i style="top:343px;left:78px;width:67px;background:linear-gradient(90deg,#62a1ec 0px,#006ff6 1.5px,#005ff6 12.5px,#0057f7 15.5px,#1c51f7 18.5px,#2d41f7 21.5px,#3333f7 22.5px,#8638fa 40.5px,#c72bff 57.5px,#db26ff 64.5px,#de3cfb 65.5px,#e09aec 67px)"></i>
<i style="top:344px;left:78px;width:65px;background:linear-gradient(90deg,#c4d2e3 0px,#0e73f5 1.5px,#006bf6 2.5px,#005bf6 12.5px,#0251f7 15.5px,#1d47f7 18.5px,#2341f7 19.5px,#2931f7 20.5px,#6b38f9 34.5px,#ba2cfe 53.5px,#d625ff 62.5px,#db53f7 63.5px,#dfb1e8 65px)"></i>
<i style="top:345px;left:79px;width:62px;background:linear-gradient(90deg,#5496ee 0px,#0069f7 1.5px,#0059f7 10.5px,#004cf7 13.5px,#1740f7 16.5px,#1e2ff7 17.5px,#5639f8 28.5px,#b62bfd 51.5px,#d024ff 59.5px,#ddb1e8 62px)"></i>
<i style="top:346px;left:79px;width:60px;background:linear-gradient(90deg,#c4d1e3 0px,#0066f7 1.5px,#0053f7 10.5px,#0044f7 13.5px,#083ef7 14.5px,#112df7 15.5px,#3635f8 21.5px,#7139f9 34.5px,#c126fe 54.5px,#ca24ff 57.5px,#d46af3 58.5px,#dec8e4 60px)"></i>
<i style="top:347px;left:80px;width:57px;background:linear-gradient(90deg,#5492ef 0px,#0062f7 1.5px,#0051f7 8.5px,#003cf7 11.5px,#0032f7 12.5px,#0b2cf7 13.5px,#2e33f7 18.5px,#693af9 31.5px,#c124fe 53.5px,#c62ffc 54.5px,#d481ef 55.5px,#ddc8e4 57px)"></i>
<i style="top:348px;left:80px;width:55px;background:linear-gradient(90deg,#c4d0e3 0px,#005ef7 1.5px,#004bf7 8.5px,#0039f7 10.5px,#0028f7 11.5px,#0f2cf7 13.5px,#3434f8 19.5px,#6d3af9 32.5px,#ba25fe 51.5px,#c23bfa 52.5px,#d081ef 53.5px,#ded4e2 55px)"></i>
<i style="top:349px;left:81px;width:51px;background:linear-gradient(90deg,#709dec 0px,#0059f8 1.5px,#0048f8 6.5px,#0036f8 8.5px,#0027f8 9.5px,#0029f8 10.5px,#202ff8 14.5px,#613af9 28.5px,#a42cfc 44.5px,#b326fd 48.5px,#bc3cfa 49.5px,#d299eb 51px)"></i>
<i style="top:350px;left:81px;width:49px;background:linear-gradient(90deg,#d2d7e2 0px,#0e5df6 1.5px,#0052f8 2.5px,#003ff8 6.5px,#0025f8 8.5px,#0229f8 10.5px,#222ff8 14.5px,#623af9 28.5px,#a42bfc 44.5px,#ac28fd 46.5px,#bc55f6 47.5px,#cf9aeb 49px)"></i>
<i style="top:351px;left:82px;width:46px;background:linear-gradient(90deg,#8caae9 0px,#004cf8 1.5px,#003df8 4.5px,#0023f8 6.5px,#0027f8 8.5px,#242ff8 13.5px,#623af9 27.5px,#a52bfc 43.5px,#b757f5 44.5px,#d3b2e7 46px)"></i>
<i style="top:352px;left:83px;width:43px;background:linear-gradient(90deg,#2a63f4 0px,#0041f8 1.5px,#003af8 2.5px,#0022f8 4.5px,#0027f8 7.5px,#1b2cf8 10.5px,#5339f9 22.5px,#8d32fb 36.5px,#9e2dfc 40.5px,#b96ff1 41.5px,#d9c9e4 43px)"></i>
<i style="top:353px;left:83px;width:41px;background:linear-gradient(90deg,#a8b8e6 0px,#0038f9 1.5px,#0020f9 3.5px,#0025f8 6.5px,#282ff8 12.5px,#6439f9 26.5px,#9231fb 37.5px,#9b3afa 38.5px,#b97cef 39.5px,#d8cae3 41px)"></i>
<i style="top:354px;left:84px;width:38px;background:linear-gradient(90deg,#6277ee 0px,#001ef9 1.5px,#0025f9 5.5px,#1f2bf9 9.5px,#5d38f9 23.5px,#8a32fb 34.5px,#943cf9 35.5px,#dbd5e2 38px)"></i>
<i style="top:355px;left:84px;width:36px;background:linear-gradient(90deg,#d2d4e2 0px,#2a42f4 1.5px,#001ff9 2.5px,#0424f9 5.5px,#222bf9 9.5px,#5e38f9 23.5px,#8334fa 32.5px,#9248f7 33.5px,#c09fea 34.5px,#dbd5e2 36px)"></i>
<i style="top:356px;left:85px;width:32px;background:linear-gradient(90deg,#b6bbe5 0px,#0e2bf8 1.5px,#0020f9 2.5px,#0022f9 3.5px,#1f29f9 7.5px,#5f37f9 22.5px,#7b34fa 29.5px,#9254f5 30.5px,#bd9fea 32px)"></i>
<i style="top:357px;left:86px;width:29px;background:linear-gradient(90deg,#9aa3e8 0px,#0020f9 1.5px,#0322f9 2.5px,#2128f9 6.5px,#6036f9 21.5px,#7435fa 26.5px,#925ff4 27.5px,#c7b5e7 29px)"></i>
<i style="top:358px;left:87px;width:26px;background:linear-gradient(90deg,#8c98ea 0px,#0821fa 1.5px,#2427f9 5.5px,#6135fa 20.5px,#6d34fa 23.5px,#c5b5e7 26px)"></i>
<i style="top:359px;left:88px;width:23px;background:linear-gradient(90deg,#7680ed 0px,#1522fa 1.5px,#3c2df9 9.5px,#6634fa 20.5px,#9674f0 21.5px,#d2cae3 23px)"></i>
<i style="top:360px;left:89px;width:20px;background:linear-gradient(90deg,#9598ea 0px,#1f23fa 1.5px,#5c32fa 16.5px,#683df8 17.5px,#d8d5e2 20px)"></i>
<i style="top:361px;left:90px;width:17px;background:linear-gradient(90deg,#a4a5e8 0px,#2723fa 1.5px,#5630fa 13.5px,#6a46f7 14.5px,#a793eb 15.5px,#d8d5e2 17px)"></i>
<i style="top:362px;left:91px;width:13px;background:linear-gradient(90deg,#bebce5 0px,#392ff9 1.5px,#3225fa 2.5px,#502dfa 10.5px,#6544f7 11.5px,#ad9dea 13px)"></i>
<i style="top:363px;left:92px;width:10px;background:linear-gradient(90deg,#bfbce5 0px,#4a3bf7 1.5px,#3925fa 2.5px,#4b2afa 7.5px,#7358f4 8.5px,#b4a8e8 10px)"></i>
<i style="top:364px;left:93px;width:7px;background:linear-gradient(90deg,#d5d4e2 0px,#5a47f5 1.5px,#3f25fa 2.5px,#4627fa 4.5px,#7861f2 5.5px,#bbb2e7 7px)"></i>
<i style="top:365px;left:94px;width:4px;background:linear-gradient(90deg,#d6d4e2 0px,#7d6af1 1.5px,#7f6bf1 2.5px,#cdc9e3 4px)"></i>
<div class="abs" style="left:0;top:0;opacity:.4"><div class="gv" style="left:75px"></div><div class="gv" style="left:104px"></div><div class="gv" style="left:132px"></div><div class="gv" style="left:160px"></div><div class="gv" style="left:189px"></div><div class="gv" style="left:217px"></div><div class="gv" style="left:245px"></div><div class="gv" style="left:274px"></div><div class="gh" style="top:339px"></div><div class="gh" style="top:310px"></div><div class="gh" style="top:282px"></div><div class="gh" style="top:254px"></div><div class="gh" style="top:225px"></div><div class="gh" style="top:197px"></div><div class="gh" style="top:169px"></div><div class="gh" style="top:140px"></div></div>
<svg class="abs" width="624" height="500" style="left:0;top:0"><polygon points="223.75,272.5 134.6,197.9 92.9,343.75" fill="none" stroke="#f0a840" stroke-width="1" stroke-linejoin="miter"/><polygon points="239.3,284.2 147.3,197.5 87.5,348.3" fill="none" stroke="#000" stroke-width="1" stroke-linejoin="miter"/></svg>
<b class="t" style="left:50.00px;top:113.38px;font-size:9px;line-height:9px;color:#222;">y</b><b class="t" style="left:49.50px;top:306.38px;font-size:9px;line-height:9px;color:#222;transform:scaleX(0.9280);transform-origin:0 0;">0.2</b><b class="t" style="left:49.50px;top:250.38px;font-size:9px;line-height:9px;color:#222;transform:scaleX(0.9280);transform-origin:0 0;">0.4</b><b class="t" style="left:49.50px;top:193.38px;font-size:9px;line-height:9px;color:#222;transform:scaleX(0.9280);transform-origin:0 0;">0.6</b><b class="t" style="left:49.50px;top:136.38px;font-size:9px;line-height:9px;color:#222;transform:scaleX(0.9280);transform-origin:0 0;">0.8</b><b class="t" style="left:49.50px;top:358.38px;font-size:9px;line-height:9px;color:#222;">0</b><b class="t" style="left:98.10px;top:358.38px;font-size:9px;line-height:9px;color:#222;transform:scaleX(0.9440);transform-origin:0 0;">0.2</b><b class="t" style="left:154.80px;top:358.38px;font-size:9px;line-height:9px;color:#222;transform:scaleX(0.9440);transform-origin:0 0;">0.4</b><b class="t" style="left:211.50px;top:358.38px;font-size:9px;line-height:9px;color:#222;transform:scaleX(0.9440);transform-origin:0 0;">0.6</b><b class="t" style="left:268.20px;top:358.38px;font-size:9px;line-height:9px;color:#222;transform:scaleX(0.9440);transform-origin:0 0;">0.8</b><div class="abs" style="left:290px;top:350px;width:8px;height:17px;overflow:hidden"><b class="t" style="left:5.00px;top:8.38px;font-size:9px;line-height:9px;color:#222;">x</b></div>
<b class="t" style="left:215.00px;top:161.57px;font-size:13.5px;line-height:13.5px;color:#000;font-weight:bold;transform:scaleX(0.9899);transform-origin:0 0;">Monitor</b>
<b class="t" style="left:215.00px;top:177.15px;font-size:14px;line-height:14px;color:#f2b040;font-weight:bold;transform:scaleX(0.9769);transform-origin:0 0;">sRGB</b>
<div class="abs" style="left:321px;top:112px;width:256px;height:256px;border:1px solid #000;background:linear-gradient(180deg,#e24a14 0%,#e44e14 2%,#ee7412 13.4%,#eecb12 30.3%,#ebeb14 39.8%,#d0e612 50%,#a8c814 60.6%,#88b412 69.7%,#62a010 81.5%,#46920e 90.2%,#3a8e12 100%)"></div>
<div class="dl" style="top:163px"></div><div class="dl" style="top:214px"></div><div class="dl" style="top:265px"></div><div class="dl" style="top:315px"></div>
<b class="t" style="left:323.00px;top:114.38px;font-size:9px;line-height:9px;color:rgba(20,0,0,.8);transform:scaleX(0.8571);transform-origin:0 0;">10 d E 94</b><b class="t" style="left:323.00px;top:159.38px;font-size:9px;line-height:9px;color:rgba(20,0,0,.8);transform:scaleX(0.8716);transform-origin:0 0;">8 d E 94</b><b class="t" style="left:323.00px;top:210.38px;font-size:9px;line-height:9px;color:rgba(20,0,0,.8);transform:scaleX(0.8716);transform-origin:0 0;">6 d E 94</b><b class="t" style="left:323.00px;top:261.38px;font-size:9px;line-height:9px;color:rgba(20,0,0,.8);transform:scaleX(0.8716);transform-origin:0 0;">4 d E 94</b><b class="t" style="left:323.00px;top:311.38px;font-size:9px;line-height:9px;color:rgba(20,0,0,.8);transform:scaleX(0.8716);transform-origin:0 0;">2 d E 94</b>
<div class="bar" style="left:366px;top:353px;height:15px;background:#333333"></div><div class="bar" style="left:378px;top:358px;height:10px;background:#4a4a4a"></div><div class="bar" style="left:390px;top:351px;height:17px;background:#8a8a8a"></div><div class="bar" style="left:402px;top:356px;height:12px;background:#cccccc"></div><div class="bar" style="left:426px;top:330px;height:38px;background:#ff0000"></div><div class="bar" style="left:438px;top:344px;height:24px;background:#00ff00"></div><div class="bar" style="left:450px;top:346px;height:22px;background:#0000ff"></div><div class="bar" style="left:462px;top:353px;height:15px;background:#00ffff"></div><div class="bar" style="left:474px;top:348px;height:20px;background:#ff00ff"></div><div class="bar" style="left:486px;top:366px;height:2px;background:#000"></div><div class="bar" style="left:498px;top:358px;height:10px;background:#b85c5c"></div><div class="bar" style="left:510px;top:351px;height:17px;background:#5aaa6a"></div><div class="bar" style="left:522px;top:366px;height:2px;background:#000"></div><div class="bar" style="left:534px;top:353px;height:15px;background:#5aaab4"></div><div class="bar" style="left:546px;top:358px;height:10px;background:#b05ab4"></div><div class="bar" style="left:558px;top:356px;height:12px;background:#b4aa5a"></div>
<b class="t" style="left:109.00px;top:379.84px;font-size:12px;line-height:12px;color:#000;transform:scaleX(1.0495);transform-origin:0 0;">Target</b>
<b class="t" style="left:174.00px;top:379.84px;font-size:12px;line-height:12px;color:#000;transform:scaleX(1.0250);transform-origin:0 0;">Current</b>
<b class="t" style="left:238.00px;top:379.84px;font-size:12px;line-height:12px;color:#000;">Deviation</b>
<b class="t" style="left:46.00px;top:394.84px;font-size:12px;line-height:12px;color:#000;transform:scaleX(1.0304);transform-origin:0 0;">Gamma</b>
<b class="t" style="left:46.00px;top:409.84px;font-size:12px;line-height:12px;color:#000;transform:scaleX(0.9786);transform-origin:0 0;">Kelvin</b>
<b class="t" style="left:46.00px;top:424.84px;font-size:12px;line-height:12px;color:#000;transform:scaleX(1.0092);transform-origin:0 0;">cd/m2</b>
<b class="t" style="left:110.00px;top:394.84px;font-size:12px;line-height:12px;color:#000;transform:scaleX(0.9581);transform-origin:0 0;">2.2</b>
<b class="t" style="left:110.00px;top:409.84px;font-size:12px;line-height:12px;color:#000;transform:scaleX(1.0112);transform-origin:0 0;">6500</b>
<b class="t" style="left:110.00px;top:424.84px;font-size:12px;line-height:12px;color:#000;">160</b>
<b class="t" style="left:174.00px;top:394.84px;font-size:12px;line-height:12px;color:#2e8a1a;transform:scaleX(0.9581);transform-origin:0 0;">2.2</b>
<b class="t" style="left:174.00px;top:409.84px;font-size:12px;line-height:12px;color:#2e8a1a;transform:scaleX(0.9363);transform-origin:0 0;">6471</b>
<b class="t" style="left:174.00px;top:424.84px;font-size:12px;line-height:12px;color:#2e8a1a;transform:scaleX(0.9500);transform-origin:0 0;">161</b>
<b class="t" style="left:238.00px;top:394.84px;font-size:12px;line-height:12px;color:#2e8a1a;transform:scaleX(0.9798);transform-origin:0 0;">0%</b>
<b class="t" style="left:238.00px;top:409.84px;font-size:12px;line-height:12px;color:#2e8a1a;transform:scaleX(0.9798);transform-origin:0 0;">0%</b>
<b class="t" style="left:238.00px;top:424.84px;font-size:12px;line-height:12px;color:#2e8a1a;transform:scaleX(0.9798);transform-origin:0 0;">1%</b>
<b class="t" style="left:322.00px;top:379.84px;font-size:12px;line-height:12px;color:#000;transform:scaleX(0.9827);transform-origin:0 0;">Delta E Average</b>
<b class="t" style="left:322.00px;top:394.84px;font-size:12px;line-height:12px;color:#000;transform:scaleX(1.0032);transform-origin:0 0;">Delta E Maximum</b>
<b class="t" style="left:436.00px;top:379.84px;font-size:12px;line-height:12px;color:#2e8a1a;transform:scaleX(0.9581);transform-origin:0 0;">0.6</b>
<b class="t" style="left:436.00px;top:394.84px;font-size:12px;line-height:12px;color:#2e8a1a;transform:scaleX(0.9581);transform-origin:0 0;">1.5</b>
<div class="btn" style="left:19px"></div>
<b class="t" style="left:30.00px;top:470.69px;font-size:11px;line-height:11px;color:#000;transform:scaleX(0.9375);transform-origin:0 0;">Main Menu</b>
<div class="btn" style="left:104px;border:2px solid #1c6fc4"><div class="abs" style="left:0;top:0;right:0;bottom:0;border:1px dotted #000"></div></div>
<b class="t" style="left:115.00px;top:470.69px;font-size:11px;line-height:11px;color:#000;transform:scaleX(0.9696);transform-origin:0 0;">Calibration</b>
<div class="btn" style="left:446px"></div>
<b class="t" style="left:470.00px;top:470.69px;font-size:11px;line-height:11px;color:#000;transform:scaleX(0.9581);transform-origin:0 0;">Save</b>
<div class="btn" style="left:531px"></div>
<b class="t" style="left:557.00px;top:470.69px;font-size:11px;line-height:11px;color:#000;transform:scaleX(0.9926);transform-origin:0 0;">Quit</b>
</body></html>
